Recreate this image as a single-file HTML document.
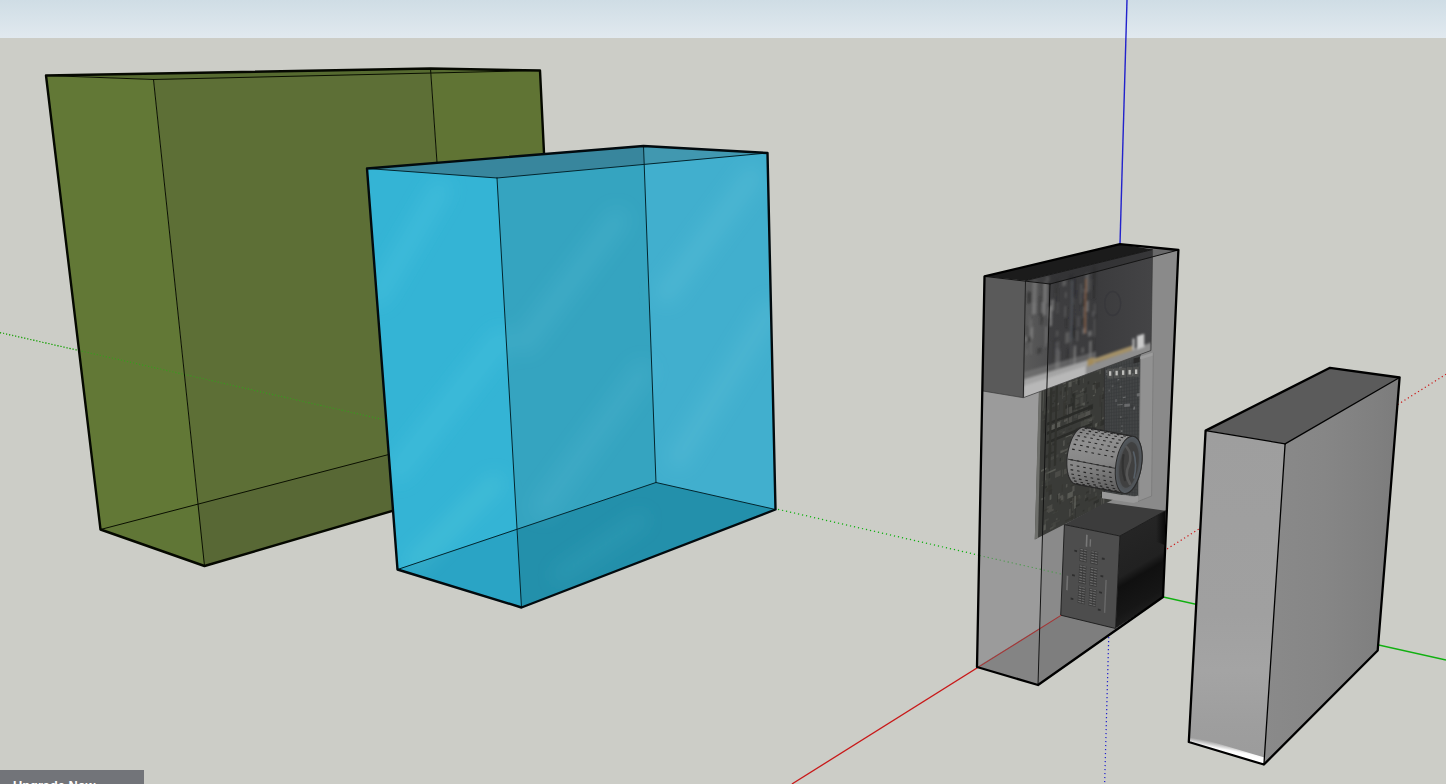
<!DOCTYPE html>
<html lang="en">
<head>
<meta charset="utf-8">
<title>SketchUp Model</title>
<style>
html,body{margin:0;padding:0;width:1446px;height:784px;overflow:hidden;background:#cccdc7;}
#stage{position:relative;width:1446px;height:784px;overflow:hidden;background:#cccdc7;}
#sky{position:absolute;left:0;top:0;width:1446px;height:38px;background:linear-gradient(#cfdde5,#e1e9ef);}
svg{position:absolute;left:0;top:0;}
#upgrade{position:absolute;left:0;top:770px;width:144px;height:30px;background:#727479;color:#fff;
 font-family:"Liberation Sans",sans-serif;font-weight:bold;font-size:12.8px;line-height:14px;}
#upgrade span{position:absolute;left:13px;top:8.7px;white-space:nowrap;}
</style>
</head>
<body>
<div id="stage">
<div id="sky"></div>
<svg width="1446" height="784" viewBox="0 0 1446 784">
<defs>
<linearGradient id="gbl" x1="0" y1="0" x2="0" y2="1"><stop offset="0" stop-color="#9e9e9e"/><stop offset="0.55" stop-color="#a0a0a0"/><stop offset="0.72" stop-color="#a4a4a4"/><stop offset="0.88" stop-color="#9e9e9e"/><stop offset="1" stop-color="#9b9b9b"/></linearGradient>
<linearGradient id="gbr" x1="0" y1="0" x2="1" y2="0"><stop offset="0" stop-color="#8a8a8a"/><stop offset="0.45" stop-color="#868686"/><stop offset="0.8" stop-color="#808080"/><stop offset="1" stop-color="#7c7c7c"/></linearGradient>
<linearGradient id="gbh" gradientUnits="userSpaceOnUse" x1="1226" y1="744" x2="1224.5" y2="752"><stop offset="0" stop-color="#fff" stop-opacity="0"/><stop offset="0.7" stop-color="#fff" stop-opacity="0.95"/><stop offset="1" stop-color="#fff"/></linearGradient>
<filter id="bstreak" x="-20%" y="-20%" width="140%" height="140%"><feGaussianBlur stdDeviation="9"/></filter>
<clipPath id="blueclip"><polygon points="367,168.5 643.5,146 767.5,153 775.5,509.5 521.5,607.5 397.5,569.5"/></clipPath>
</defs>

<!-- ===== AXES (behind objects) ===== -->
<g id="axes-back" fill="none">
  <line x1="0" y1="332.6" x2="400" y2="423.4" stroke="#18b018" stroke-width="1.1" stroke-dasharray="1.1 2"/>
  <line x1="770" y1="507.5" x2="1109.5" y2="585" stroke="#10b010" stroke-width="1.25" stroke-dasharray="1.2 2.9"/>
  <line x1="1109.5" y1="585" x2="1446" y2="660" stroke="#10b010" stroke-width="1.3"/>
  <line x1="1109.5" y1="585" x2="1446" y2="374.3" stroke="#cc1515" stroke-width="1.25" stroke-dasharray="1.2 2.8"/>
  <line x1="1127" y1="0" x2="1120" y2="244" stroke="#2222cc" stroke-width="1.4"/>
  <line x1="1110.2" y1="585" x2="1104.6" y2="784" stroke="#2222cc" stroke-width="1.25" stroke-dasharray="1.2 2.8"/>
</g>

<!-- ===== GREEN BOX ===== -->
<g id="greenbox">
  <polygon points="46,75.5 153.5,79.5 204.5,566 100.5,529.5" fill="#627836"/>
  <polygon points="153.5,79.5 430.5,68.5 456,437 204.5,566" fill="#5d6f36"/>
  <polygon points="430.5,68.5 540,70.5 559,462 456,437" fill="#607434"/>
  <polygon points="46,75.5 430.5,68.5 540,70.5 153.5,79.5" fill="#566a30"/>
  <polygon points="204.5,566 559,462 456,437 197.6,504.2" fill="#586835"/>
  <polygon points="100.5,529.5 197.6,504.2 204.5,566" fill="#607636"/>
  <!-- axis seen through -->
  <line x1="0" y1="332.6" x2="392" y2="421.6" stroke="#35a01c" stroke-width="1.1" stroke-dasharray="1.1 2"/>
  <g stroke="#0a0f00" stroke-width="1" fill="none" stroke-linecap="round">
    <line x1="46" y1="75.5" x2="153.5" y2="79.5"/>
    <line x1="153.5" y1="79.5" x2="540" y2="70.5"/>
    <line x1="153.5" y1="79.5" x2="204.5" y2="566"/>
    <line x1="430.5" y1="68.5" x2="456" y2="437"/>
    <line x1="100.5" y1="529.5" x2="456" y2="437"/>
    <line x1="456" y1="437" x2="559" y2="462"/>
  </g>
  <polygon points="46,75.5 430.5,68.5 540,70.5 559,462 204.5,566 100.5,529.5" fill="none" stroke="#050800" stroke-width="2.4" stroke-linejoin="round"/>
</g>

<!-- ===== BLUE BOX ===== -->
<g id="bluebox">
  <polygon points="367,168.5 643.5,146 767.5,153 775.5,509.5 521.5,607.5 397.5,569.5" fill="#35a4c0"/>
  <polygon points="367,168.5 497,178 521.5,607.5 397.5,569.5" fill="#34b4d5"/>
  <polygon points="643.5,146 767.5,153 775.5,509.5 656,482.5" fill="#41afce"/>
  <polygon points="367,168.5 643.5,146 767.5,153 497,178" fill="#38869d"/>
  <polygon points="643.5,146 767.5,153 644.4,164.4" fill="#4198b0"/>
  <polygon points="397.5,569.5 656,482.5 775.5,509.5 521.5,607.5" fill="#2390ab"/>
  <polygon points="397.5,569.5 517.6,528.3 521.5,607.5" fill="#2aa4c5"/>
  <g clip-path="url(#blueclip)" filter="url(#bstreak)" stroke-linecap="round" fill="none">
    <line x1="378" y1="295" x2="440" y2="190" stroke="#6fe0f0" stroke-opacity="0.15" stroke-width="22"/>
    <line x1="398" y1="470" x2="500" y2="340" stroke="#6fe0f0" stroke-opacity="0.13" stroke-width="26"/>
    <line x1="415" y1="562" x2="495" y2="483" stroke="#7fe8e0" stroke-opacity="0.17" stroke-width="18"/>
    <line x1="525" y1="342" x2="617" y2="220" stroke="#7fd8ea" stroke-opacity="0.11" stroke-width="24"/>
    <line x1="543" y1="507" x2="642" y2="372" stroke="#7fd8ea" stroke-opacity="0.10" stroke-width="24"/>
    <line x1="666" y1="293" x2="752" y2="177" stroke="#8fe0f0" stroke-opacity="0.11" stroke-width="24"/>
    <line x1="678" y1="458" x2="770" y2="311" stroke="#8fe0f0" stroke-opacity="0.10" stroke-width="24"/>
    <line x1="560" y1="575" x2="640" y2="520" stroke="#5fc8d8" stroke-opacity="0.13" stroke-width="16"/>
  </g>
  <g stroke="#03252e" stroke-width="1" fill="none" stroke-linecap="round">
    <line x1="367" y1="168.5" x2="497" y2="178"/>
    <line x1="497" y1="178" x2="767.5" y2="153"/>
    <line x1="497" y1="178" x2="521.5" y2="607.5"/>
    <line x1="643.5" y1="146" x2="656" y2="482.5"/>
    <line x1="397.5" y1="569.5" x2="656" y2="482.5"/>
    <line x1="656" y1="482.5" x2="775.5" y2="509.5"/>
  </g>
  <polygon points="367,168.5 643.5,146 767.5,153 775.5,509.5 521.5,607.5 397.5,569.5" fill="none" stroke="#020a0e" stroke-width="2.4" stroke-linejoin="round"/>
</g>

<!-- ===== RED AXIS solid ===== -->
<line x1="791.9" y1="784" x2="1109.5" y2="585" stroke="#c81818" stroke-width="1.3"/>

<!-- ===== PC CASE ===== -->
<g id="case">
<polygon points="984.5,276.4 1119.9,244.1 1178.4,250.0 1163.0,597.0 1038.0,685.0 977.0,667.0" fill="#8a8a8a"/>
<polygon points="984.5,276.4 1050.0,284.0 1038.0,685.0 977.0,667.0" fill="#9b9b9b"/>
<polygon points="977.0,667.0 1109.5,585.0 1163.0,597.0 1038.0,685.0" fill="#7e7e7e"/>
<polygon points="977.0,667.0 1039.3,629.0 1038.0,685.0" fill="#848484"/>
<polygon points="1039.5,380.0 1140.4,345.0 1140.4,485.7 1034.8,539.4" fill="#3a3b38"/>
<polygon points="1034.8,539.4 1038.8,391.0 1041.5,390.0 1038.0,537.8" fill="#6d6e6a"/>
<polygon points="1063.2,396.2 1064.8,395.6 1064.8,396.8 1063.2,397.4" fill="#565752" opacity="0.6"/>
<polygon points="1066.3,381.8 1067.3,381.5 1066.9,400.6 1065.9,401.0" fill="#33342f" opacity="0.6"/>
<polygon points="1069.2,406.8 1072.2,405.6 1071.8,424.9 1068.8,426.1" fill="#565752" opacity="0.6"/>
<polygon points="1102.4,448.6 1110.4,445.0 1110.4,446.2 1102.4,449.8" fill="#33342f" opacity="0.6"/>
<polygon points="1044.2,413.5 1045.3,413.1 1044.7,433.0 1043.6,433.4" fill="#2e2f2b" opacity="0.6"/>
<polygon points="1076.4,451.5 1077.4,451.1 1077.0,470.7 1076.0,471.2" fill="#282926" opacity="0.6"/>
<polygon points="1065.2,453.0 1066.8,452.3 1066.8,453.5 1065.1,454.2" fill="#6d6e68" opacity="0.6"/>
<polygon points="1085.8,426.8 1088.9,425.5 1088.9,430.7 1085.7,432.1" fill="#6d6e68" opacity="0.6"/>
<polygon points="1065.4,409.3 1066.4,408.9 1066.3,413.8 1065.3,414.2" fill="#62635d" opacity="0.6"/>
<polygon points="1074.5,497.3 1079.9,494.7 1079.8,497.8 1074.4,500.4" fill="#565752" opacity="0.6"/>
<polygon points="1048.2,441.0 1051.5,439.6 1051.5,441.5 1048.1,442.9" fill="#33342f" opacity="0.6"/>
<polygon points="1041.6,481.5 1050.7,477.4 1050.6,480.5 1041.5,484.7" fill="#434440" opacity="0.6"/>
<polygon points="1079.9,451.3 1085.1,449.0 1085.1,450.2 1079.9,452.5" fill="#62635d" opacity="0.6"/>
<polygon points="1071.7,467.3 1073.3,466.5 1073.2,469.6 1071.6,470.4" fill="#6d6e68" opacity="0.6"/>
<polygon points="1059.8,431.5 1063.0,430.2 1063.0,431.4 1059.7,432.7" fill="#434440" opacity="0.6"/>
<polygon points="1052.8,395.2 1054.4,394.6 1054.4,396.4 1052.7,397.0" fill="#2e2f2b" opacity="0.6"/>
<polygon points="1089.6,421.0 1090.3,420.8 1090.1,432.7 1089.4,433.0" fill="#33342f" opacity="0.6"/>
<polygon points="1076.1,497.7 1081.5,495.1 1081.4,498.3 1076.0,500.9" fill="#434440" opacity="0.6"/>
<polygon points="1086.1,420.0 1087.1,419.6 1087.0,424.4 1086.0,424.8" fill="#2e2f2b" opacity="0.6"/>
<polygon points="1056.7,410.5 1057.8,410.1 1057.5,422.3 1056.4,422.8" fill="#4b4c48" opacity="0.6"/>
<polygon points="1049.6,457.8 1058.6,453.9 1058.5,457.0 1049.6,460.9" fill="#4b4c48" opacity="0.6"/>
<polygon points="1069.9,498.9 1078.5,494.7 1078.5,500.2 1069.8,504.4" fill="#33342f" opacity="0.6"/>
<polygon points="1046.3,474.2 1047.4,473.7 1047.3,477.6 1046.2,478.0" fill="#282926" opacity="0.6"/>
<polygon points="1071.1,387.5 1071.7,387.2 1071.3,406.3 1070.7,406.6" fill="#2e2f2b" opacity="0.6"/>
<polygon points="1075.1,508.1 1075.7,507.7 1075.4,528.1 1074.7,528.4" fill="#282926" opacity="0.6"/>
<polygon points="1082.2,388.8 1085.3,387.6 1085.3,390.5 1082.2,391.7" fill="#6d6e68" opacity="0.6"/>
<polygon points="1046.8,506.7 1052.5,504.0 1052.3,509.6 1046.6,512.4" fill="#565752" opacity="0.6"/>
<polygon points="1048.7,490.6 1052.1,489.0 1051.9,494.6 1048.5,496.3" fill="#2e2f2b" opacity="0.6"/>
<polygon points="1075.7,399.2 1077.4,398.6 1077.1,417.7 1075.4,418.3" fill="#4b4c48" opacity="0.6"/>
<polygon points="1091.1,406.4 1092.6,405.7 1092.6,408.7 1091.0,409.3" fill="#2e2f2b" opacity="0.6"/>
<polygon points="1065.1,405.8 1073.6,402.5 1073.6,405.5 1065.0,408.8" fill="#282926" opacity="0.6"/>
<polygon points="1093.1,480.0 1095.2,479.0 1095.1,480.8 1093.1,481.8" fill="#434440" opacity="0.6"/>
<polygon points="1087.9,507.8 1090.8,506.3 1090.7,513.8 1087.8,515.3" fill="#434440" opacity="0.6"/>
<polygon points="1069.0,509.3 1070.8,508.4 1070.6,516.0 1068.9,516.9" fill="#565752" opacity="0.6"/>
<polygon points="1056.5,405.3 1058.7,404.5 1058.6,409.8 1056.4,410.6" fill="#4b4c48" opacity="0.6"/>
<polygon points="1072.1,465.4 1073.7,464.7 1073.7,466.0 1072.0,466.7" fill="#282926" opacity="0.6"/>
<polygon points="1073.3,396.3 1076.5,395.1 1076.5,396.3 1073.3,397.5" fill="#33342f" opacity="0.6"/>
<polygon points="1070.7,479.4 1071.7,479.0 1071.7,482.7 1070.6,483.2" fill="#2e2f2b" opacity="0.6"/>
<polygon points="1041.1,469.9 1046.8,467.4 1046.7,469.3 1041.0,471.9" fill="#6d6e68" opacity="0.6"/>
<polygon points="1084.5,416.4 1085.5,416.0 1085.2,435.1 1084.2,435.5" fill="#565752" opacity="0.6"/>
<polygon points="1074.4,506.1 1079.8,503.4 1079.8,505.3 1074.4,508.0" fill="#282926" opacity="0.6"/>
<polygon points="1042.7,412.9 1051.7,409.5 1051.6,411.3 1042.7,414.7" fill="#434440" opacity="0.6"/>
<polygon points="1057.9,437.1 1060.1,436.2 1060.1,437.4 1057.9,438.4" fill="#434440" opacity="0.6"/>
<polygon points="1099.2,454.6 1107.3,450.9 1107.3,456.1 1099.2,459.8" fill="#2e2f2b" opacity="0.6"/>
<polygon points="1075.9,444.8 1077.5,444.1 1077.4,449.5 1075.8,450.2" fill="#4b4c48" opacity="0.6"/>
<polygon points="1092.5,385.1 1094.5,384.4 1094.5,389.4 1092.4,390.2" fill="#565752" opacity="0.6"/>
<polygon points="1078.0,415.5 1086.4,412.1 1086.3,417.3 1077.9,420.7" fill="#565752" opacity="0.6"/>
<polygon points="1099.3,369.8 1100.9,369.3 1100.9,373.8 1099.3,374.4" fill="#565752" opacity="0.6"/>
<polygon points="1074.2,451.1 1075.8,450.4 1075.7,455.8 1074.1,456.5" fill="#282926" opacity="0.6"/>
<polygon points="1086.6,430.0 1094.8,426.6 1094.7,431.8 1086.5,435.3" fill="#282926" opacity="0.6"/>
<polygon points="1086.0,491.9 1089.2,490.4 1089.2,492.2 1086.0,493.8" fill="#2e2f2b" opacity="0.6"/>
<polygon points="1068.6,428.8 1071.8,427.5 1071.8,428.7 1068.6,430.0" fill="#33342f" opacity="0.6"/>
<polygon points="1044.0,480.6 1045.7,479.8 1045.6,481.7 1043.9,482.5" fill="#434440" opacity="0.6"/>
<polygon points="1048.1,511.3 1053.8,508.5 1053.7,510.5 1048.0,513.3" fill="#565752" opacity="0.6"/>
<polygon points="1067.1,443.3 1069.3,442.4 1069.2,444.2 1067.1,445.1" fill="#33342f" opacity="0.6"/>
<polygon points="1064.1,402.3 1067.3,401.1 1067.3,402.3 1064.0,403.5" fill="#4b4c48" opacity="0.6"/>
<polygon points="1063.1,440.8 1064.8,440.1 1064.7,445.5 1063.0,446.2" fill="#62635d" opacity="0.6"/>
<polygon points="1075.9,379.3 1076.5,379.0 1076.4,383.8 1075.8,384.0" fill="#62635d" opacity="0.6"/>
<polygon points="1041.1,498.6 1044.6,497.0 1044.5,499.0 1041.1,500.6" fill="#62635d" opacity="0.6"/>
<polygon points="1067.5,450.4 1076.1,446.6 1076.0,452.0 1067.4,455.8" fill="#565752" opacity="0.6"/>
<polygon points="1057.9,493.9 1060.2,492.8 1060.0,498.4 1057.8,499.4" fill="#62635d" opacity="0.6"/>
<polygon points="1101.8,449.4 1104.9,448.1 1104.8,449.2 1101.8,450.6" fill="#282926" opacity="0.6"/>
<polygon points="1042.7,510.8 1048.4,508.0 1048.4,509.3 1042.7,512.1" fill="#33342f" opacity="0.6"/>
<polygon points="1101.7,398.0 1103.7,397.2 1103.7,398.4 1101.7,399.1" fill="#282926" opacity="0.6"/>
<polygon points="1101.3,498.0 1101.9,497.7 1101.9,505.1 1101.2,505.4" fill="#62635d" opacity="0.6"/>
<polygon points="1082.2,443.2 1084.3,442.3 1084.3,445.3 1082.2,446.2" fill="#2e2f2b" opacity="0.6"/>
<polygon points="1057.3,494.8 1058.0,494.4 1057.9,502.1 1057.1,502.4" fill="#282926" opacity="0.6"/>
<polygon points="1075.5,405.0 1080.7,403.0 1080.7,404.2 1075.5,406.2" fill="#33342f" opacity="0.6"/>
<polygon points="1084.0,444.6 1089.2,442.3 1089.2,445.3 1084.0,447.6" fill="#282926" opacity="0.6"/>
<polygon points="1062.2,496.8 1064.4,495.7 1064.3,501.3 1062.1,502.3" fill="#4b4c48" opacity="0.6"/>
<polygon points="1096.6,365.0 1099.3,364.0 1099.3,370.9 1096.5,371.9" fill="#565752" opacity="0.6"/>
<polygon points="1085.0,420.5 1093.2,417.2 1093.2,420.1 1084.9,423.5" fill="#62635d" opacity="0.6"/>
<polygon points="1044.0,408.4 1047.2,407.2 1047.0,414.6 1043.8,415.8" fill="#434440" opacity="0.6"/>
<polygon points="1102.8,497.8 1104.4,497.0 1104.2,516.6 1102.6,517.5" fill="#62635d" opacity="0.6"/>
<polygon points="1055.9,403.5 1059.0,402.4 1058.8,409.6 1055.8,410.8" fill="#62635d" opacity="0.6"/>
<polygon points="1074.9,398.9 1075.5,398.7 1075.2,417.8 1074.5,418.1" fill="#565752" opacity="0.6"/>
<polygon points="1049.3,465.7 1050.0,465.4 1049.7,478.1 1049.0,478.4" fill="#282926" opacity="0.6"/>
<polygon points="1043.6,525.1 1045.9,523.9 1045.7,529.7 1043.4,530.8" fill="#6d6e68" opacity="0.6"/>
<polygon points="1049.2,486.5 1051.4,485.5 1051.4,486.8 1049.1,487.8" fill="#33342f" opacity="0.6"/>
<polygon points="1088.4,481.3 1090.5,480.3 1090.5,481.5 1088.4,482.5" fill="#282926" opacity="0.6"/>
<polygon points="1047.4,386.3 1050.7,385.1 1050.7,386.3 1047.3,387.5" fill="#6d6e68" opacity="0.6"/>
<polygon points="1077.4,459.4 1085.8,455.6 1085.8,457.4 1077.4,461.2" fill="#4b4c48" opacity="0.6"/>
<polygon points="1072.2,381.4 1080.6,378.4 1080.6,379.6 1072.2,382.6" fill="#565752" opacity="0.6"/>
<polygon points="1089.9,431.7 1091.6,431.0 1091.5,434.6 1089.9,435.3" fill="#282926" opacity="0.6"/>
<polygon points="1055.1,472.6 1060.7,470.1 1060.6,475.6 1055.0,478.1" fill="#565752" opacity="0.6"/>
<polygon points="1071.9,470.0 1073.0,469.6 1072.9,473.3 1071.9,473.8" fill="#2e2f2b" opacity="0.6"/>
<polygon points="1062.1,469.7 1063.1,469.2 1063.0,476.8 1061.9,477.3" fill="#4b4c48" opacity="0.6"/>
<polygon points="1071.5,513.4 1073.2,512.6 1073.2,514.5 1071.5,515.3" fill="#62635d" opacity="0.6"/>
<polygon points="1088.0,405.8 1093.1,403.8 1093.0,408.9 1087.9,411.0" fill="#282926" opacity="0.6"/>
<polygon points="1062.6,387.1 1063.3,386.9 1063.0,398.9 1062.3,399.1" fill="#565752" opacity="0.6"/>
<polygon points="1093.7,501.7 1098.9,499.1 1098.8,502.1 1093.7,504.7" fill="#282926" opacity="0.6"/>
<polygon points="1046.5,393.6 1055.3,390.4 1055.2,393.4 1046.4,396.7" fill="#2e2f2b" opacity="0.6"/>
<polygon points="1080.3,458.6 1083.5,457.2 1083.5,458.4 1080.3,459.8" fill="#282926" opacity="0.6"/>
<polygon points="1072.6,498.3 1073.3,498.0 1073.1,510.6 1072.4,511.0" fill="#6d6e68" opacity="0.6"/>
<polygon points="1086.0,423.6 1088.0,422.7 1088.0,428.0 1085.9,428.8" fill="#434440" opacity="0.6"/>
<polygon points="1048.7,428.0 1052.1,426.6 1052.0,429.7 1048.6,431.1" fill="#565752" opacity="0.6"/>
<polygon points="1102.6,387.7 1104.2,387.1 1104.2,390.5 1102.6,391.1" fill="#565752" opacity="0.6"/>
<polygon points="1065.1,520.6 1073.9,516.2 1073.9,517.4 1065.1,521.9" fill="#33342f" opacity="0.6"/>
<polygon points="1089.8,486.8 1090.4,486.5 1090.3,493.9 1089.7,494.2" fill="#62635d" opacity="0.6"/>
<polygon points="1083.6,388.3 1086.6,387.2 1086.6,392.3 1083.5,393.5" fill="#282926" opacity="0.6"/>
<polygon points="1091.0,476.1 1096.2,473.6 1096.2,474.9 1091.0,477.3" fill="#33342f" opacity="0.6"/>
<polygon points="1099.8,494.6 1107.9,490.6 1107.9,492.4 1099.7,496.4" fill="#4b4c48" opacity="0.6"/>
<polygon points="1101.9,417.8 1109.8,414.5 1109.8,416.3 1101.9,419.6" fill="#62635d" opacity="0.6"/>
<polygon points="1071.7,504.2 1072.8,503.7 1072.4,524.0 1071.3,524.5" fill="#33342f" opacity="0.6"/>
<polygon points="1064.0,417.0 1067.3,415.7 1067.2,421.0 1063.9,422.3" fill="#62635d" opacity="0.6"/>
<polygon points="1072.3,467.7 1073.9,467.0 1073.8,468.8 1072.2,469.6" fill="#565752" opacity="0.6"/>
<polygon points="1052.6,512.7 1058.2,509.9 1058.2,511.8 1052.5,514.6" fill="#434440" opacity="0.6"/>
<polygon points="1105.7,421.7 1106.7,421.3 1106.6,426.0 1105.7,426.4" fill="#2e2f2b" opacity="0.6"/>
<polygon points="1064.6,387.1 1066.3,386.5 1066.2,391.3 1064.5,391.9" fill="#282926" opacity="0.6"/>
<polygon points="1098.4,467.5 1103.5,465.1 1103.4,470.4 1098.4,472.8" fill="#282926" opacity="0.6"/>
<polygon points="1066.1,422.0 1069.2,420.8 1069.1,424.4 1066.1,425.7" fill="#434440" opacity="0.6"/>
<polygon points="1048.4,453.6 1049.1,453.3 1049.0,458.4 1048.2,458.7" fill="#282926" opacity="0.6"/>
<polygon points="1065.7,467.2 1071.1,464.8 1071.1,467.9 1065.6,470.4" fill="#4b4c48" opacity="0.6"/>
<polygon points="1048.8,441.8 1051.9,440.5 1051.6,453.0 1048.5,454.4" fill="#33342f" opacity="0.6"/>
<polygon points="1100.8,492.2 1109.0,488.2 1108.9,493.5 1100.8,497.6" fill="#282926" opacity="0.6"/>
<polygon points="1092.8,395.3 1094.8,394.5 1094.8,395.7 1092.8,396.5" fill="#6d6e68" opacity="0.6"/>
<polygon points="1044.4,496.8 1045.5,496.3 1045.4,500.2 1044.3,500.7" fill="#4b4c48" opacity="0.6"/>
<polygon points="1083.9,410.0 1085.9,409.2 1085.9,412.1 1083.8,413.0" fill="#33342f" opacity="0.6"/>
<polygon points="1087.7,381.7 1089.2,381.1 1089.2,384.0 1087.6,384.6" fill="#282926" opacity="0.6"/>
<polygon points="1067.2,405.1 1067.9,404.8 1067.5,424.1 1066.8,424.4" fill="#62635d" opacity="0.6"/>
<polygon points="1106.0,397.8 1108.9,396.6 1108.9,398.4 1105.9,399.5" fill="#282926" opacity="0.6"/>
<polygon points="1078.2,373.6 1079.9,373.0 1079.6,384.7 1078.0,385.3" fill="#282926" opacity="0.6"/>
<polygon points="1073.3,468.1 1073.9,467.8 1073.7,480.2 1073.0,480.5" fill="#33342f" opacity="0.6"/>
<polygon points="1101.7,392.3 1103.1,391.7 1103.1,394.6 1101.6,395.2" fill="#434440" opacity="0.6"/>
<polygon points="1086.5,394.1 1087.1,393.9 1087.0,400.9 1086.4,401.2" fill="#282926" opacity="0.6"/>
<polygon points="1060.1,495.9 1063.2,494.4 1063.1,499.5 1060.0,501.0" fill="#62635d" opacity="0.6"/>
<polygon points="1046.7,472.4 1055.7,468.4 1055.7,470.3 1046.7,474.3" fill="#6d6e68" opacity="0.6"/>
<polygon points="1067.8,469.2 1076.5,465.3 1076.4,467.1 1067.8,471.0" fill="#4b4c48" opacity="0.6"/>
<polygon points="1052.7,523.1 1055.8,521.5 1055.7,526.7 1052.5,528.3" fill="#4b4c48" opacity="0.6"/>
<polygon points="1052.6,443.8 1056.0,442.4 1055.9,443.7 1052.6,445.1" fill="#2e2f2b" opacity="0.6"/>
<polygon points="1063.4,401.1 1066.4,399.9 1066.0,419.2 1063.0,420.4" fill="#33342f" opacity="0.6"/>
<polygon points="1094.9,503.5 1095.9,503.0 1095.7,515.4 1094.7,516.0" fill="#565752" opacity="0.6"/>
<polygon points="1059.5,426.6 1061.2,425.9 1061.1,427.8 1059.5,428.4" fill="#62635d" opacity="0.6"/>
<polygon points="1094.9,423.8 1097.7,422.6 1097.7,426.1 1094.8,427.3" fill="#6d6e68" opacity="0.6"/>
<polygon points="1053.6,430.9 1059.1,428.6 1059.1,429.9 1053.5,432.1" fill="#282926" opacity="0.6"/>
<polygon points="1093.6,472.2 1096.5,470.9 1096.4,474.5 1093.5,475.9" fill="#565752" opacity="0.6"/>
<polygon points="1094.4,372.3 1096.4,371.6 1096.4,372.7 1094.4,373.5" fill="#434440" opacity="0.6"/>
<polygon points="1065.2,421.9 1065.9,421.6 1065.5,441.2 1064.8,441.5" fill="#434440" opacity="0.6"/>
<polygon points="1101.5,402.1 1102.1,401.9 1101.9,420.6 1101.3,420.8" fill="#282926" opacity="0.6"/>
<polygon points="1046.2,486.6 1051.9,484.0 1051.7,489.6 1046.1,492.2" fill="#33342f" opacity="0.6"/>
<polygon points="1095.0,381.8 1095.9,381.5 1095.8,393.1 1094.8,393.4" fill="#62635d" opacity="0.6"/>
<polygon points="1094.3,472.8 1102.5,468.9 1102.4,470.7 1094.2,474.6" fill="#434440" opacity="0.6"/>
<polygon points="1070.4,485.6 1079.0,481.5 1079.0,482.8 1070.4,486.9" fill="#33342f" opacity="0.6"/>
<polygon points="1090.8,399.3 1092.4,398.7 1092.4,399.9 1090.8,400.5" fill="#434440" opacity="0.6"/>
<polygon points="1051.1,441.1 1051.8,440.8 1051.7,444.5 1051.0,444.8" fill="#565752" opacity="0.6"/>
<polygon points="1054.4,438.9 1055.5,438.4 1055.2,450.9 1054.1,451.3" fill="#33342f" opacity="0.6"/>
<polygon points="1070.1,501.8 1072.3,500.8 1072.3,502.0 1070.1,503.1" fill="#62635d" opacity="0.6"/>
<polygon points="1059.8,458.2 1063.1,456.7 1063.0,459.8 1059.7,461.3" fill="#282926" opacity="0.6"/>
<polygon points="1070.8,398.3 1071.8,397.9 1071.7,402.7 1070.7,403.1" fill="#282926" opacity="0.6"/>
<polygon points="1062.6,431.9 1064.7,431.0 1064.7,432.8 1062.5,433.7" fill="#565752" opacity="0.6"/>
<polygon points="1082.7,510.5 1084.3,509.7 1084.3,511.0 1082.7,511.8" fill="#282926" opacity="0.6"/>
<polygon points="1095.1,493.0 1096.8,492.2 1096.7,495.9 1095.1,496.7" fill="#4b4c48" opacity="0.6"/>
<polygon points="1051.0,523.7 1060.1,519.2 1060.0,521.1 1051.0,525.7" fill="#434440" opacity="0.6"/>
<polygon points="1075.6,395.4 1083.9,392.2 1083.9,395.2 1075.5,398.3" fill="#4b4c48" opacity="0.6"/>
<polygon points="1046.6,468.3 1048.4,467.5 1047.9,487.9 1046.0,488.8" fill="#434440" opacity="0.6"/>
<polygon points="1064.6,380.5 1067.8,379.3 1067.8,380.5 1064.6,381.7" fill="#282926" opacity="0.6"/>
<polygon points="1093.7,479.8 1095.3,479.0 1095.2,491.2 1093.5,492.0" fill="#62635d" opacity="0.6"/>
<polygon points="1046.9,385.0 1050.0,383.9 1049.7,396.0 1046.6,397.1" fill="#565752" opacity="0.6"/>
<polygon points="1092.7,457.7 1094.8,456.8 1094.8,458.0 1092.7,458.9" fill="#33342f" opacity="0.6"/>
<polygon points="1086.8,423.9 1089.9,422.6 1089.9,425.6 1086.8,426.8" fill="#4b4c48" opacity="0.6"/>
<polygon points="1061.0,457.6 1064.3,456.1 1064.2,461.6 1060.9,463.0" fill="#434440" opacity="0.6"/>
<polygon points="1083.6,422.5 1088.8,420.3 1088.8,422.1 1083.6,424.3" fill="#33342f" opacity="0.6"/>
<polygon points="1099.9,420.4 1101.4,419.8 1101.3,425.0 1099.8,425.6" fill="#434440" opacity="0.6"/>
<polygon points="1072.2,394.5 1073.8,393.9 1073.8,395.1 1072.2,395.7" fill="#33342f" opacity="0.6"/>
<polygon points="1045.3,472.8 1046.4,472.3 1046.2,480.0 1045.1,480.5" fill="#62635d" opacity="0.6"/>
<polygon points="1052.1,403.3 1053.8,402.7 1053.8,403.9 1052.1,404.6" fill="#282926" opacity="0.6"/>
<polygon points="1059.4,498.9 1061.0,498.1 1060.9,503.7 1059.2,504.5" fill="#33342f" opacity="0.6"/>
<polygon points="1044.7,486.8 1047.0,485.7 1047.0,487.6 1044.7,488.7" fill="#282926" opacity="0.6"/>
<polygon points="1095.8,388.5 1097.8,387.7 1097.8,388.9 1095.8,389.6" fill="#2e2f2b" opacity="0.6"/>
<polygon points="1067.3,390.7 1068.3,390.3 1068.2,395.1 1067.1,395.5" fill="#4b4c48" opacity="0.6"/>
<polygon points="1085.3,412.3 1090.4,410.3 1090.3,415.5 1085.2,417.5" fill="#62635d" opacity="0.6"/>
<polygon points="1084.1,410.5 1086.2,409.7 1086.1,414.9 1084.0,415.8" fill="#434440" opacity="0.6"/>
<polygon points="1070.5,434.7 1072.1,434.1 1072.1,435.3 1070.5,435.9" fill="#6d6e68" opacity="0.6"/>
<polygon points="1071.7,435.5 1080.2,431.9 1080.1,437.2 1071.6,440.8" fill="#6d6e68" opacity="0.6"/>
<polygon points="1068.5,382.3 1071.7,381.2 1071.6,386.4 1068.4,387.5" fill="#6d6e68" opacity="0.6"/>
<polygon points="1073.7,465.3 1074.7,464.8 1074.7,468.6 1073.6,469.0" fill="#434440" opacity="0.6"/>
<polygon points="1091.9,436.2 1093.4,435.6 1093.4,440.8 1091.8,441.5" fill="#2e2f2b" opacity="0.6"/>
<polygon points="1043.2,391.3 1043.9,391.1 1043.3,410.7 1042.6,411.0" fill="#6d6e68" opacity="0.6"/>
<polygon points="1058.5,495.3 1059.6,494.8 1059.5,499.9 1058.4,500.4" fill="#434440" opacity="0.6"/>
<polygon points="1081.7,403.5 1084.8,402.3 1084.8,405.3 1081.7,406.5" fill="#6d6e68" opacity="0.6"/>
<polygon points="1049.6,452.9 1055.2,450.5 1055.2,452.4 1049.6,454.8" fill="#282926" opacity="0.6"/>
<polygon points="1063.2,379.9 1066.2,378.9 1066.1,383.6 1063.1,384.7" fill="#62635d" opacity="0.6"/>
<polygon points="1084.7,495.3 1086.4,494.5 1086.3,499.5 1084.6,500.3" fill="#4b4c48" opacity="0.6"/>
<polygon points="1083.1,418.2 1083.8,418.0 1083.6,429.9 1082.9,430.2" fill="#33342f" opacity="0.6"/>
<polygon points="1089.6,417.3 1094.8,415.2 1094.7,418.1 1089.6,420.2" fill="#434440" opacity="0.6"/>
<polygon points="1063.9,386.0 1066.0,385.2 1066.0,387.0 1063.8,387.8" fill="#4b4c48" opacity="0.6"/>
<polygon points="1060.1,450.5 1063.4,449.1 1063.3,452.2 1060.0,453.6" fill="#4b4c48" opacity="0.6"/>
<polygon points="1055.8,419.2 1061.3,417.1 1061.2,422.4 1055.7,424.6" fill="#4b4c48" opacity="0.6"/>
<polygon points="1049.9,412.3 1050.6,412.0 1050.5,415.7 1049.8,415.9" fill="#434440" opacity="0.6"/>
<polygon points="1060.6,451.3 1069.3,447.6 1069.3,449.4 1060.5,453.2" fill="#62635d" opacity="0.6"/>
<polygon points="1080.5,397.2 1083.4,396.1 1083.1,415.1 1080.1,416.3" fill="#4b4c48" opacity="0.6"/>
<polygon points="1102.3,394.4 1105.1,393.3 1105.1,397.9 1102.3,399.0" fill="#2e2f2b" opacity="0.6"/>
<polygon points="1097.3,472.7 1102.5,470.3 1102.4,473.3 1097.3,475.7" fill="#4b4c48" opacity="0.6"/>
<polygon points="1083.2,447.3 1086.4,445.9 1086.3,451.2 1083.1,452.6" fill="#6d6e68" opacity="0.6"/>
<polygon points="1055.4,510.9 1057.1,510.1 1057.1,511.3 1055.4,512.2" fill="#33342f" opacity="0.6"/>
<polygon points="1053.8,400.9 1055.5,400.3 1055.4,401.5 1053.8,402.1" fill="#282926" opacity="0.6"/>
<polygon points="1050.7,407.9 1059.5,404.6 1059.4,409.9 1050.6,413.3" fill="#2e2f2b" opacity="0.6"/>
<polygon points="1075.6,379.3 1077.2,378.7 1077.1,383.9 1075.5,384.5" fill="#4b4c48" opacity="0.6"/>
<polygon points="1065.7,436.5 1071.1,434.2 1071.1,435.4 1065.7,437.7" fill="#6d6e68" opacity="0.6"/>
<polygon points="1049.9,528.0 1053.3,526.2 1053.3,528.2 1049.9,529.9" fill="#565752" opacity="0.6"/>
<polygon points="1062.0,484.4 1062.7,484.1 1062.5,491.7 1061.8,492.0" fill="#33342f" opacity="0.6"/>
<polygon points="1085.1,498.4 1088.2,496.9 1088.2,500.0 1085.0,501.5" fill="#282926" opacity="0.6"/>
<polygon points="1045.5,455.5 1047.8,454.5 1047.7,457.6 1045.4,458.6" fill="#282926" opacity="0.6"/>
<polygon points="1102.1,465.3 1105.1,463.9 1105.1,465.7 1102.0,467.1" fill="#434440" opacity="0.6"/>
<polygon points="1080.8,422.0 1089.1,418.6 1089.1,423.8 1080.7,427.2" fill="#4b4c48" opacity="0.6"/>
<polygon points="1097.1,423.5 1099.1,422.7 1099.1,425.6 1097.0,426.5" fill="#33342f" opacity="0.6"/>
<polygon points="1082.9,378.6 1083.9,378.3 1083.8,382.9 1082.9,383.3" fill="#565752" opacity="0.6"/>
<polygon points="1045.3,519.8 1048.7,518.1 1048.7,520.0 1045.2,521.7" fill="#4b4c48" opacity="0.6"/>
<polygon points="1041.6,485.2 1043.4,484.4 1043.3,485.7 1041.6,486.5" fill="#565752" opacity="0.6"/>
<polygon points="1096.4,470.2 1098.5,469.2 1098.5,470.4 1096.4,471.4" fill="#33342f" opacity="0.6"/>
<polygon points="1048.2,409.7 1049.0,409.5 1048.9,413.2 1048.2,413.4" fill="#565752" opacity="0.6"/>
<polygon points="1094.7,452.2 1097.5,450.9 1097.5,458.1 1094.6,459.4" fill="#565752" opacity="0.6"/>
<polygon points="1092.5,455.3 1095.6,453.9 1095.6,456.9 1092.5,458.3" fill="#62635d" opacity="0.6"/>
<polygon points="1042.0,419.6 1045.4,418.3 1045.4,419.5 1042.0,420.9" fill="#434440" opacity="0.6"/>
<polygon points="1099.8,469.6 1107.9,465.9 1107.9,471.1 1099.8,474.9" fill="#4b4c48" opacity="0.6"/>
<polygon points="1093.5,368.4 1101.5,365.6 1101.5,366.7 1093.5,369.5" fill="#4b4c48" opacity="0.6"/>
<polygon points="1077.1,400.3 1078.8,399.6 1078.7,403.2 1077.1,403.9" fill="#4b4c48" opacity="0.6"/>
<polygon points="1076.0,410.9 1077.6,410.3 1077.6,411.5 1076.0,412.1" fill="#565752" opacity="0.6"/>
<polygon points="1072.4,486.6 1074.6,485.6 1074.5,491.0 1072.3,492.1" fill="#62635d" opacity="0.6"/>
<polygon points="1079.9,391.1 1081.9,390.3 1081.9,392.1 1079.8,392.9" fill="#565752" opacity="0.6"/>
<polygon points="1101.6,468.5 1106.7,466.1 1106.7,467.3 1101.6,469.7" fill="#434440" opacity="0.6"/>
<polygon points="1044.5,520.1 1046.2,519.3 1046.0,525.0 1044.3,525.9" fill="#4b4c48" opacity="0.6"/>
<polygon points="1065.9,417.0 1071.3,414.9 1071.2,416.7 1065.9,418.8" fill="#282926" opacity="0.6"/>
<polygon points="1103.0,378.1 1110.8,375.2 1110.8,376.3 1102.9,379.2" fill="#434440" opacity="0.6"/>
<polygon points="1074.3,496.3 1076.0,495.5 1075.8,508.1 1074.0,509.0" fill="#6d6e68" opacity="0.6"/>
<polygon points="1086.8,402.3 1088.8,401.5 1088.8,403.3 1086.7,404.1" fill="#282926" opacity="0.6"/>
<polygon points="1075.0,408.3 1083.4,405.1 1083.4,406.8 1075.0,410.1" fill="#282926" opacity="0.6"/>
<polygon points="1088.2,450.9 1089.2,450.5 1089.1,457.8 1088.1,458.2" fill="#282926" opacity="0.6"/>
<polygon points="1055.9,518.5 1057.6,517.7 1057.6,519.6 1055.9,520.5" fill="#565752" opacity="0.6"/>
<polygon points="1054.5,399.4 1056.7,398.6 1056.6,401.6 1054.4,402.5" fill="#33342f" opacity="0.6"/>
<polygon points="1060.0,391.4 1061.7,390.8 1061.6,394.4 1059.9,395.0" fill="#33342f" opacity="0.6"/>
<polygon points="1072.9,373.1 1078.1,371.3 1078.0,373.0 1072.8,374.9" fill="#62635d" opacity="0.6"/>
<polygon points="1072.4,391.5 1075.4,390.4 1075.0,409.4 1072.1,410.6" fill="#282926" opacity="0.6"/>
<polygon points="1100.3,421.2 1108.2,417.8 1108.2,423.0 1100.2,426.3" fill="#282926" opacity="0.6"/>
<polygon points="1085.3,457.8 1090.5,455.5 1090.4,460.8 1085.2,463.2" fill="#565752" opacity="0.6"/>
<polygon points="1099.7,395.2 1100.7,394.8 1100.6,406.4 1099.6,406.8" fill="#33342f" opacity="0.6"/>
<polygon points="1074.1,373.7 1079.3,371.8 1079.2,373.6 1074.0,375.4" fill="#434440" opacity="0.6"/>
<polygon points="1092.2,418.7 1092.8,418.4 1092.7,430.3 1092.0,430.6" fill="#282926" opacity="0.6"/>
<polygon points="1049.7,495.0 1051.5,494.2 1051.4,499.3 1049.6,500.2" fill="#6d6e68" opacity="0.6"/>
<polygon points="1076.0,473.1 1084.5,469.2 1084.5,470.5 1076.0,474.4" fill="#434440" opacity="0.6"/>
<polygon points="1075.5,428.6 1080.8,426.4 1080.8,428.2 1075.5,430.4" fill="#2e2f2b" opacity="0.6"/>
<polygon points="1065.9,484.6 1067.5,483.8 1067.4,487.0 1065.8,487.7" fill="#62635d" opacity="0.6"/>
<polygon points="1059.0,433.8 1060.7,433.2 1060.6,434.4 1059.0,435.1" fill="#33342f" opacity="0.6"/>
<polygon points="1081.9,464.2 1083.6,463.5 1083.2,483.2 1081.6,484.0" fill="#62635d" opacity="0.6"/>
<polygon points="1088.7,500.0 1097.0,495.9 1097.0,497.7 1088.6,501.9" fill="#33342f" opacity="0.6"/>
<polygon points="1072.3,394.7 1073.9,394.1 1073.9,395.9 1072.3,396.5" fill="#282926" opacity="0.6"/>
<polygon points="1094.9,383.7 1099.9,381.9 1099.9,386.9 1094.9,388.8" fill="#2e2f2b" opacity="0.6"/>
<polygon points="1092.1,430.1 1094.2,429.3 1094.1,432.2 1092.1,433.1" fill="#62635d" opacity="0.6"/>
<polygon points="1104.5,454.5 1109.6,452.2 1109.5,453.4 1104.5,455.7" fill="#62635d" opacity="0.6"/>
<polygon points="1063.9,469.4 1067.1,467.9 1067.0,473.3 1063.7,474.8" fill="#565752" opacity="0.6"/>
<polygon points="1084.6,418.0 1087.5,416.9 1087.4,424.0 1084.5,425.2" fill="#434440" opacity="0.6"/>
<polygon points="1093.0,383.6 1096.0,382.5 1096.0,383.7 1093.0,384.8" fill="#282926" opacity="0.6"/>
<polygon points="1102.6,452.1 1105.7,450.8 1105.6,451.9 1102.6,453.3" fill="#282926" opacity="0.6"/>
<polygon points="1052.7,444.1 1055.0,443.2 1054.9,445.1 1052.7,446.0" fill="#2e2f2b" opacity="0.6"/>
<polygon points="1080.6,466.7 1082.3,466.0 1082.2,469.6 1080.5,470.4" fill="#282926" opacity="0.6"/>
<polygon points="1075.2,477.1 1080.6,474.6 1080.6,475.9 1075.2,478.4" fill="#62635d" opacity="0.6"/>
<polygon points="1067.5,493.5 1072.9,490.9 1072.8,496.4 1067.3,499.0" fill="#6d6e68" opacity="0.6"/>
<polygon points="1072.7,391.7 1077.9,389.8 1077.9,391.6 1072.7,393.5" fill="#4b4c48" opacity="0.6"/>
<polygon points="1051.5,425.3 1060.3,421.8 1060.2,427.1 1051.3,430.7" fill="#6d6e68" opacity="0.6"/>
<polygon points="1065.8,433.9 1067.4,433.2 1067.3,435.0 1065.7,435.7" fill="#4b4c48" opacity="0.6"/>
<polygon points="1047.2,422.7 1092.1,405.0 1092.1,407.7 1047.1,425.5" fill="#2a2b28"/>
<polygon points="1046.9,432.1 1092.0,413.9 1091.9,416.5 1046.9,434.9" fill="#2a2b28"/>
<polygon points="1046.7,441.4 1091.9,422.8 1091.8,425.4 1046.6,444.2" fill="#2a2b28"/>
<polygon points="1050.4,383.7 1052.6,382.9 1050.5,467.8 1048.2,468.8" fill="#30312d"/>
<polygon points="1055.9,381.7 1058.1,381.0 1056.1,465.3 1053.8,466.3" fill="#30312d"/>
<polygon points="1104.4,352.0 1140.4,342.0 1140.4,497.0 1104.4,492.0" fill="#434546"/>
<line x1="1106.7" y1="365.4" x2="1106.7" y2="492.3" stroke="#383a3b" stroke-width="0.6"/>
<line x1="1109.1" y1="364.9" x2="1109.1" y2="492.7" stroke="#383a3b" stroke-width="0.6"/>
<line x1="1111.5" y1="364.3" x2="1111.5" y2="493.0" stroke="#383a3b" stroke-width="0.6"/>
<line x1="1114.0" y1="363.7" x2="1114.0" y2="493.3" stroke="#383a3b" stroke-width="0.6"/>
<line x1="1116.4" y1="363.2" x2="1116.4" y2="493.7" stroke="#383a3b" stroke-width="0.6"/>
<line x1="1118.9" y1="362.6" x2="1118.9" y2="494.0" stroke="#383a3b" stroke-width="0.6"/>
<line x1="1121.5" y1="362.0" x2="1121.5" y2="494.4" stroke="#383a3b" stroke-width="0.6"/>
<line x1="1124.1" y1="361.4" x2="1124.1" y2="494.7" stroke="#383a3b" stroke-width="0.6"/>
<line x1="1126.7" y1="360.7" x2="1126.7" y2="495.1" stroke="#383a3b" stroke-width="0.6"/>
<line x1="1129.4" y1="360.1" x2="1129.4" y2="495.5" stroke="#383a3b" stroke-width="0.6"/>
<line x1="1132.1" y1="359.5" x2="1132.1" y2="495.8" stroke="#383a3b" stroke-width="0.6"/>
<line x1="1134.8" y1="358.8" x2="1134.8" y2="496.2" stroke="#383a3b" stroke-width="0.6"/>
<line x1="1137.6" y1="358.2" x2="1137.6" y2="496.6" stroke="#383a3b" stroke-width="0.6"/>
<line x1="1104.4" y1="369.1" x2="1140.4" y2="361.0" stroke="#393b3c" stroke-width="0.6"/>
<line x1="1104.4" y1="372.3" x2="1140.4" y2="364.5" stroke="#393b3c" stroke-width="0.6"/>
<line x1="1104.4" y1="375.4" x2="1140.4" y2="368.0" stroke="#393b3c" stroke-width="0.6"/>
<line x1="1104.4" y1="378.6" x2="1140.4" y2="371.4" stroke="#393b3c" stroke-width="0.6"/>
<line x1="1104.4" y1="381.8" x2="1140.4" y2="374.9" stroke="#393b3c" stroke-width="0.6"/>
<line x1="1104.4" y1="384.9" x2="1140.4" y2="378.4" stroke="#393b3c" stroke-width="0.6"/>
<line x1="1104.4" y1="388.1" x2="1140.4" y2="381.9" stroke="#393b3c" stroke-width="0.6"/>
<line x1="1104.4" y1="391.2" x2="1140.4" y2="385.4" stroke="#393b3c" stroke-width="0.6"/>
<line x1="1104.4" y1="394.4" x2="1140.4" y2="388.9" stroke="#393b3c" stroke-width="0.6"/>
<line x1="1104.4" y1="397.5" x2="1140.4" y2="392.4" stroke="#393b3c" stroke-width="0.6"/>
<line x1="1104.4" y1="400.6" x2="1140.4" y2="395.9" stroke="#393b3c" stroke-width="0.6"/>
<line x1="1104.4" y1="403.8" x2="1140.4" y2="399.4" stroke="#393b3c" stroke-width="0.6"/>
<line x1="1104.4" y1="406.9" x2="1140.4" y2="402.8" stroke="#393b3c" stroke-width="0.6"/>
<line x1="1104.4" y1="410.1" x2="1140.4" y2="406.3" stroke="#393b3c" stroke-width="0.6"/>
<line x1="1104.4" y1="413.2" x2="1140.4" y2="409.8" stroke="#393b3c" stroke-width="0.6"/>
<line x1="1104.4" y1="416.4" x2="1140.4" y2="413.3" stroke="#393b3c" stroke-width="0.6"/>
<line x1="1104.4" y1="419.6" x2="1140.4" y2="416.8" stroke="#393b3c" stroke-width="0.6"/>
<line x1="1104.4" y1="422.7" x2="1140.4" y2="420.3" stroke="#393b3c" stroke-width="0.6"/>
<line x1="1104.4" y1="425.9" x2="1140.4" y2="423.8" stroke="#393b3c" stroke-width="0.6"/>
<line x1="1104.4" y1="429.0" x2="1140.4" y2="427.2" stroke="#393b3c" stroke-width="0.6"/>
<line x1="1104.4" y1="432.1" x2="1140.4" y2="430.7" stroke="#393b3c" stroke-width="0.6"/>
<line x1="1104.4" y1="435.3" x2="1140.4" y2="434.2" stroke="#393b3c" stroke-width="0.6"/>
<line x1="1104.4" y1="438.4" x2="1140.4" y2="437.7" stroke="#393b3c" stroke-width="0.6"/>
<line x1="1104.4" y1="441.6" x2="1140.4" y2="441.2" stroke="#393b3c" stroke-width="0.6"/>
<line x1="1104.4" y1="444.8" x2="1140.4" y2="444.7" stroke="#393b3c" stroke-width="0.6"/>
<line x1="1104.4" y1="447.9" x2="1140.4" y2="448.2" stroke="#393b3c" stroke-width="0.6"/>
<line x1="1104.4" y1="451.1" x2="1140.4" y2="451.7" stroke="#393b3c" stroke-width="0.6"/>
<line x1="1104.4" y1="454.2" x2="1140.4" y2="455.2" stroke="#393b3c" stroke-width="0.6"/>
<line x1="1104.4" y1="457.4" x2="1140.4" y2="458.6" stroke="#393b3c" stroke-width="0.6"/>
<line x1="1104.4" y1="460.5" x2="1140.4" y2="462.1" stroke="#393b3c" stroke-width="0.6"/>
<line x1="1104.4" y1="463.6" x2="1140.4" y2="465.6" stroke="#393b3c" stroke-width="0.6"/>
<line x1="1104.4" y1="466.8" x2="1140.4" y2="469.1" stroke="#393b3c" stroke-width="0.6"/>
<line x1="1104.4" y1="469.9" x2="1140.4" y2="472.6" stroke="#393b3c" stroke-width="0.6"/>
<line x1="1104.4" y1="473.1" x2="1140.4" y2="476.1" stroke="#393b3c" stroke-width="0.6"/>
<line x1="1104.4" y1="476.2" x2="1140.4" y2="479.6" stroke="#393b3c" stroke-width="0.6"/>
<line x1="1104.4" y1="479.4" x2="1140.4" y2="483.1" stroke="#393b3c" stroke-width="0.6"/>
<line x1="1104.4" y1="482.6" x2="1140.4" y2="486.5" stroke="#393b3c" stroke-width="0.6"/>
<line x1="1104.4" y1="485.7" x2="1140.4" y2="490.0" stroke="#393b3c" stroke-width="0.6"/>
<line x1="1104.4" y1="488.9" x2="1140.4" y2="493.5" stroke="#393b3c" stroke-width="0.6"/>
<polygon points="1106.0,373.9 1111.0,372.9 1111.0,374.6 1106.0,375.6" fill="#626465" opacity="0.7"/>
<polygon points="1121.1,425.5 1122.9,425.4 1122.9,426.6 1121.1,426.7" fill="#6f7172" opacity="0.7"/>
<polygon points="1127.9,443.1 1130.9,443.0 1130.9,444.2 1127.9,444.3" fill="#37393a" opacity="0.7"/>
<polygon points="1115.7,462.0 1121.0,462.2 1121.0,463.4 1115.7,463.1" fill="#37393a" opacity="0.7"/>
<polygon points="1118.7,417.9 1124.1,417.5 1124.1,418.7 1118.7,419.1" fill="#37393a" opacity="0.7"/>
<polygon points="1114.2,467.9 1117.0,468.1 1117.0,469.9 1114.2,469.7" fill="#37393a" opacity="0.7"/>
<polygon points="1133.2,406.8 1135.1,406.6 1135.1,409.6 1133.2,409.8" fill="#7c7e7f" opacity="0.7"/>
<polygon points="1130.4,405.3 1133.5,405.0 1133.5,408.0 1130.4,408.3" fill="#37393a" opacity="0.7"/>
<polygon points="1109.2,485.1 1110.9,485.3 1110.9,486.5 1109.2,486.3" fill="#7c7e7f" opacity="0.7"/>
<polygon points="1128.1,476.2 1133.8,476.7 1133.8,479.8 1128.1,479.2" fill="#626465" opacity="0.7"/>
<polygon points="1117.5,379.2 1119.3,378.9 1119.3,380.1 1117.5,380.4" fill="#7c7e7f" opacity="0.7"/>
<polygon points="1124.3,447.2 1129.9,447.2 1129.9,450.3 1124.3,450.2" fill="#7c7e7f" opacity="0.7"/>
<polygon points="1124.6,443.3 1130.1,443.2 1130.1,446.3 1124.6,446.2" fill="#626465" opacity="0.7"/>
<polygon points="1111.8,448.2 1114.5,448.3 1114.5,451.1 1111.8,451.1" fill="#6f7172" opacity="0.7"/>
<polygon points="1108.4,389.7 1110.1,389.4 1110.1,391.2 1108.4,391.4" fill="#626465" opacity="0.7"/>
<polygon points="1134.6,447.0 1137.7,447.0 1137.7,448.2 1134.6,448.2" fill="#37393a" opacity="0.7"/>
<polygon points="1122.8,397.0 1125.7,396.6 1125.7,397.8 1122.8,398.2" fill="#7c7e7f" opacity="0.7"/>
<polygon points="1106.4,370.8 1111.4,369.7 1111.4,372.5 1106.4,373.6" fill="#626465" opacity="0.7"/>
<polygon points="1120.7,430.2 1122.5,430.2 1122.5,431.9 1120.7,432.0" fill="#7c7e7f" opacity="0.7"/>
<polygon points="1119.1,367.2 1121.9,366.6 1121.9,369.5 1119.1,370.1" fill="#6f7172" opacity="0.7"/>
<polygon points="1120.0,416.6 1121.8,416.5 1121.8,417.6 1120.0,417.8" fill="#7c7e7f" opacity="0.7"/>
<polygon points="1111.7,385.6 1113.5,385.3 1113.5,387.0 1111.7,387.3" fill="#626465" opacity="0.7"/>
<polygon points="1105.7,448.5 1107.3,448.5 1107.3,449.6 1105.7,449.6" fill="#626465" opacity="0.7"/>
<polygon points="1109.2,369.8 1114.3,368.7 1114.3,371.6 1109.2,372.7" fill="#6f7172" opacity="0.7"/>
<polygon points="1119.2,457.9 1121.0,458.0 1121.0,459.7 1119.2,459.6" fill="#6f7172" opacity="0.7"/>
<polygon points="1128.3,374.1 1134.0,373.0 1134.0,376.0 1128.3,377.1" fill="#7c7e7f" opacity="0.7"/>
<polygon points="1119.5,481.3 1122.4,481.6 1122.4,482.8 1119.5,482.5" fill="#626465" opacity="0.7"/>
<polygon points="1105.7,370.3 1110.7,369.2 1110.7,372.0 1105.7,373.1" fill="#626465" opacity="0.7"/>
<polygon points="1117.2,404.5 1122.6,403.9 1122.6,405.0 1117.2,405.6" fill="#7c7e7f" opacity="0.7"/>
<polygon points="1124.3,404.1 1129.9,403.5 1129.9,406.5 1124.3,407.1" fill="#7c7e7f" opacity="0.7"/>
<polygon points="1119.8,386.0 1121.6,385.7 1121.6,387.5 1119.8,387.8" fill="#6f7172" opacity="0.7"/>
<polygon points="1125.0,416.9 1127.9,416.7 1127.9,418.5 1125.0,418.7" fill="#37393a" opacity="0.7"/>
<polygon points="1130.2,435.6 1133.2,435.5 1133.2,437.3 1130.2,437.4" fill="#626465" opacity="0.7"/>
<polygon points="1124.7,446.3 1130.3,446.3 1130.3,448.1 1124.7,448.1" fill="#626465" opacity="0.7"/>
<polygon points="1131.8,439.9 1134.8,439.9 1134.8,442.9 1131.8,443.0" fill="#7c7e7f" opacity="0.7"/>
<polygon points="1136.8,393.5 1140.0,393.1 1140.0,396.2 1136.8,396.6" fill="#7c7e7f" opacity="0.7"/>
<polygon points="1124.1,477.2 1127.0,477.5 1127.0,479.3 1124.1,479.0" fill="#626465" opacity="0.7"/>
<polygon points="1115.1,399.3 1116.9,399.0 1116.9,401.9 1115.1,402.2" fill="#626465" opacity="0.7"/>
<polygon points="1114.1,383.8 1119.3,382.9 1119.3,384.1 1114.1,385.0" fill="#37393a" opacity="0.7"/>
<polygon points="1136.8,465.4 1142.7,465.8 1142.7,468.9 1136.8,468.5" fill="#7c7e7f" opacity="0.7"/>
<rect x="1107.3" y="368.6" width="5.6" height="10" fill="#4f504f"/>
<rect x="1109.0" y="371.2" width="2.3" height="4.6" fill="#bdbdba"/>
<rect x="1113.8" y="368.2" width="5.6" height="10" fill="#4f504f"/>
<rect x="1115.5" y="370.8" width="2.3" height="4.6" fill="#bdbdba"/>
<rect x="1120.3" y="367.7" width="5.6" height="10" fill="#4f504f"/>
<rect x="1122.0" y="370.3" width="2.3" height="4.6" fill="#bdbdba"/>
<rect x="1126.8" y="367.2" width="5.6" height="10" fill="#4f504f"/>
<rect x="1128.5" y="369.9" width="2.3" height="4.6" fill="#bdbdba"/>
<rect x="1133.3" y="366.8" width="5.6" height="10" fill="#4f504f"/>
<rect x="1135.0" y="369.4" width="2.3" height="4.6" fill="#bdbdba"/>
<polygon points="1133.5,358.6 1139.6,357.0 1139.6,362.0 1133.5,363.4" fill="#2c2c2c"/>
<line x1="1104.4" y1="352" x2="1104.4" y2="492" stroke="#2e2f2e" stroke-width="0.8"/>
<polygon points="1140.4,356.5 1153.3,352.5 1151.6,496.0 1138.0,501.5" fill="#919191"/>
<polygon points="1140.4,356.5 1153.3,352.5 1153.3,355.5 1140.4,359.5" fill="#9c9c9c"/>
<polygon points="1102.0,491.6 1133.4,497.0 1138.0,495.5 1138.0,501.5 1133.4,503.0 1102.0,498.2" fill="#999999"/>
<polyline points="1140.4,359 1138.6,496" fill="none" stroke="#6c6c6c" stroke-width="0.7"/>
<polyline points="1153.3,352.5 1151.6,496 1138,501.5" fill="none" stroke="#777" stroke-width="0.7"/>
<defs><linearGradient id="cylg" x1="0" y1="0" x2="0.18" y2="1"><stop offset="0" stop-color="#7d7d7d"/><stop offset="0.25" stop-color="#909090"/><stop offset="0.6" stop-color="#858585"/><stop offset="1" stop-color="#626262"/></linearGradient><radialGradient id="capg" cx="0.5" cy="0.5" r="0.6"><stop offset="0" stop-color="#505050"/><stop offset="0.5" stop-color="#484848"/><stop offset="0.82" stop-color="#545a60"/><stop offset="1" stop-color="#65717d"/></radialGradient></defs>
<polygon points="1075.7,484.1 1074.1,483.6 1072.6,482.7 1071.2,481.2 1070.0,479.3 1068.9,477.0 1068.1,474.4 1067.4,471.4 1067.0,468.1 1066.8,464.7 1066.8,461.1 1067.1,457.3 1067.6,453.6 1068.3,449.9 1069.2,446.3 1070.3,442.8 1071.5,439.6 1072.9,436.6 1074.5,434.0 1076.1,431.7 1077.8,429.9 1079.5,428.5 1081.3,427.5 1083.0,427.0 1084.7,427.1 1133.2,436.4 1134.8,436.9 1136.3,437.8 1137.7,439.3 1138.9,441.2 1140.0,443.5 1140.8,446.1 1141.5,449.1 1141.9,452.4 1142.1,455.8 1142.1,459.4 1141.8,463.2 1141.3,466.9 1140.6,470.6 1139.7,474.2 1138.6,477.7 1137.4,480.9 1136.0,483.9 1134.4,486.5 1132.8,488.8 1131.1,490.6 1129.4,492.0 1127.6,493.0 1125.9,493.5 1124.2,493.4" fill="url(#cylg)" stroke="#2a2a2a" stroke-width="1.1" stroke-linejoin="round"/>
<line x1="1078.1" y1="484.5" x2="1080.6" y2="485.0" stroke="#262626" stroke-width="1.15"/>
<line x1="1075.9" y1="483.2" x2="1078.5" y2="483.7" stroke="#262626" stroke-width="1.15"/>
<line x1="1074.1" y1="480.9" x2="1076.6" y2="481.4" stroke="#262626" stroke-width="1.15"/>
<line x1="1072.5" y1="477.9" x2="1075.1" y2="478.3" stroke="#262626" stroke-width="1.15"/>
<line x1="1071.4" y1="474.0" x2="1073.9" y2="474.5" stroke="#262626" stroke-width="1.15"/>
<line x1="1070.6" y1="469.6" x2="1073.2" y2="470.1" stroke="#262626" stroke-width="1.15"/>
<line x1="1070.3" y1="464.7" x2="1072.9" y2="465.2" stroke="#262626" stroke-width="1.15"/>
<line x1="1070.5" y1="459.6" x2="1073.0" y2="460.0" stroke="#262626" stroke-width="1.15"/>
<line x1="1072.1" y1="449.1" x2="1074.7" y2="449.6" stroke="#262626" stroke-width="1.15"/>
<line x1="1073.6" y1="444.1" x2="1076.1" y2="444.6" stroke="#262626" stroke-width="1.15"/>
<line x1="1075.4" y1="439.5" x2="1077.9" y2="440.0" stroke="#262626" stroke-width="1.15"/>
<line x1="1077.4" y1="435.6" x2="1080.0" y2="436.1" stroke="#262626" stroke-width="1.15"/>
<line x1="1079.7" y1="432.3" x2="1082.3" y2="432.8" stroke="#262626" stroke-width="1.15"/>
<line x1="1082.2" y1="429.8" x2="1084.7" y2="430.3" stroke="#262626" stroke-width="1.15"/>
<line x1="1084.6" y1="428.3" x2="1087.2" y2="428.8" stroke="#262626" stroke-width="1.15"/>
<line x1="1087.1" y1="427.7" x2="1089.6" y2="428.2" stroke="#262626" stroke-width="1.15"/>
<line x1="1084.5" y1="485.7" x2="1087.1" y2="486.2" stroke="#262626" stroke-width="1.15"/>
<line x1="1082.4" y1="484.4" x2="1084.9" y2="484.9" stroke="#262626" stroke-width="1.15"/>
<line x1="1080.5" y1="482.2" x2="1083.0" y2="482.7" stroke="#262626" stroke-width="1.15"/>
<line x1="1078.9" y1="479.1" x2="1081.5" y2="479.6" stroke="#262626" stroke-width="1.15"/>
<line x1="1077.8" y1="475.3" x2="1080.3" y2="475.8" stroke="#262626" stroke-width="1.15"/>
<line x1="1077.0" y1="470.8" x2="1079.6" y2="471.3" stroke="#262626" stroke-width="1.15"/>
<line x1="1076.7" y1="466.0" x2="1079.3" y2="466.4" stroke="#262626" stroke-width="1.15"/>
<line x1="1076.9" y1="460.8" x2="1079.5" y2="461.3" stroke="#262626" stroke-width="1.15"/>
<line x1="1078.6" y1="450.3" x2="1081.1" y2="450.8" stroke="#262626" stroke-width="1.15"/>
<line x1="1080.0" y1="445.3" x2="1082.6" y2="445.8" stroke="#262626" stroke-width="1.15"/>
<line x1="1081.8" y1="440.8" x2="1084.3" y2="441.3" stroke="#262626" stroke-width="1.15"/>
<line x1="1083.9" y1="436.8" x2="1086.4" y2="437.3" stroke="#262626" stroke-width="1.15"/>
<line x1="1086.2" y1="433.5" x2="1088.7" y2="434.0" stroke="#262626" stroke-width="1.15"/>
<line x1="1088.6" y1="431.1" x2="1091.1" y2="431.6" stroke="#262626" stroke-width="1.15"/>
<line x1="1091.1" y1="429.5" x2="1093.6" y2="430.0" stroke="#262626" stroke-width="1.15"/>
<line x1="1093.5" y1="428.9" x2="1096.1" y2="429.4" stroke="#262626" stroke-width="1.15"/>
<line x1="1090.9" y1="487.0" x2="1093.5" y2="487.5" stroke="#262626" stroke-width="1.15"/>
<line x1="1088.8" y1="485.6" x2="1091.3" y2="486.1" stroke="#262626" stroke-width="1.15"/>
<line x1="1086.9" y1="483.4" x2="1089.5" y2="483.9" stroke="#262626" stroke-width="1.15"/>
<line x1="1085.4" y1="480.3" x2="1087.9" y2="480.8" stroke="#262626" stroke-width="1.15"/>
<line x1="1084.2" y1="476.5" x2="1086.8" y2="477.0" stroke="#262626" stroke-width="1.15"/>
<line x1="1083.5" y1="472.1" x2="1086.0" y2="472.6" stroke="#262626" stroke-width="1.15"/>
<line x1="1083.2" y1="467.2" x2="1085.7" y2="467.7" stroke="#262626" stroke-width="1.15"/>
<line x1="1083.3" y1="462.0" x2="1085.9" y2="462.5" stroke="#262626" stroke-width="1.15"/>
<line x1="1085.0" y1="451.5" x2="1087.5" y2="452.0" stroke="#262626" stroke-width="1.15"/>
<line x1="1086.4" y1="446.6" x2="1089.0" y2="447.1" stroke="#262626" stroke-width="1.15"/>
<line x1="1088.2" y1="442.0" x2="1090.8" y2="442.5" stroke="#262626" stroke-width="1.15"/>
<line x1="1090.3" y1="438.0" x2="1092.8" y2="438.5" stroke="#262626" stroke-width="1.15"/>
<line x1="1092.6" y1="434.8" x2="1095.1" y2="435.2" stroke="#262626" stroke-width="1.15"/>
<line x1="1095.0" y1="432.3" x2="1097.6" y2="432.8" stroke="#262626" stroke-width="1.15"/>
<line x1="1097.5" y1="430.7" x2="1100.0" y2="431.2" stroke="#262626" stroke-width="1.15"/>
<line x1="1099.9" y1="430.1" x2="1102.5" y2="430.6" stroke="#262626" stroke-width="1.15"/>
<line x1="1097.3" y1="488.2" x2="1099.9" y2="488.7" stroke="#262626" stroke-width="1.15"/>
<line x1="1095.2" y1="486.9" x2="1097.8" y2="487.4" stroke="#262626" stroke-width="1.15"/>
<line x1="1093.3" y1="484.6" x2="1095.9" y2="485.1" stroke="#262626" stroke-width="1.15"/>
<line x1="1091.8" y1="481.5" x2="1094.3" y2="482.0" stroke="#262626" stroke-width="1.15"/>
<line x1="1090.6" y1="477.7" x2="1093.2" y2="478.2" stroke="#262626" stroke-width="1.15"/>
<line x1="1089.9" y1="473.3" x2="1092.4" y2="473.8" stroke="#262626" stroke-width="1.15"/>
<line x1="1089.6" y1="468.4" x2="1092.1" y2="468.9" stroke="#262626" stroke-width="1.15"/>
<line x1="1089.8" y1="463.3" x2="1092.3" y2="463.7" stroke="#262626" stroke-width="1.15"/>
<line x1="1091.4" y1="452.8" x2="1094.0" y2="453.3" stroke="#262626" stroke-width="1.15"/>
<line x1="1092.9" y1="447.8" x2="1095.4" y2="448.3" stroke="#262626" stroke-width="1.15"/>
<line x1="1094.6" y1="443.2" x2="1097.2" y2="443.7" stroke="#262626" stroke-width="1.15"/>
<line x1="1096.7" y1="439.3" x2="1099.3" y2="439.8" stroke="#262626" stroke-width="1.15"/>
<line x1="1099.0" y1="436.0" x2="1101.6" y2="436.5" stroke="#262626" stroke-width="1.15"/>
<line x1="1101.4" y1="433.5" x2="1104.0" y2="434.0" stroke="#262626" stroke-width="1.15"/>
<line x1="1103.9" y1="432.0" x2="1106.5" y2="432.5" stroke="#262626" stroke-width="1.15"/>
<line x1="1106.3" y1="431.4" x2="1108.9" y2="431.9" stroke="#262626" stroke-width="1.15"/>
<line x1="1103.8" y1="489.4" x2="1106.3" y2="489.9" stroke="#262626" stroke-width="1.15"/>
<line x1="1101.6" y1="488.1" x2="1104.2" y2="488.6" stroke="#262626" stroke-width="1.15"/>
<line x1="1099.8" y1="485.9" x2="1102.3" y2="486.4" stroke="#262626" stroke-width="1.15"/>
<line x1="1098.2" y1="482.8" x2="1100.8" y2="483.3" stroke="#262626" stroke-width="1.15"/>
<line x1="1097.0" y1="479.0" x2="1099.6" y2="479.4" stroke="#262626" stroke-width="1.15"/>
<line x1="1096.3" y1="474.5" x2="1098.9" y2="475.0" stroke="#262626" stroke-width="1.15"/>
<line x1="1096.0" y1="469.7" x2="1098.6" y2="470.1" stroke="#262626" stroke-width="1.15"/>
<line x1="1096.2" y1="464.5" x2="1098.7" y2="465.0" stroke="#262626" stroke-width="1.15"/>
<line x1="1097.8" y1="454.0" x2="1100.4" y2="454.5" stroke="#262626" stroke-width="1.15"/>
<line x1="1099.3" y1="449.0" x2="1101.8" y2="449.5" stroke="#262626" stroke-width="1.15"/>
<line x1="1101.1" y1="444.5" x2="1103.6" y2="445.0" stroke="#262626" stroke-width="1.15"/>
<line x1="1103.1" y1="440.5" x2="1105.7" y2="441.0" stroke="#262626" stroke-width="1.15"/>
<line x1="1105.4" y1="437.2" x2="1108.0" y2="437.7" stroke="#262626" stroke-width="1.15"/>
<line x1="1107.8" y1="434.8" x2="1110.4" y2="435.3" stroke="#262626" stroke-width="1.15"/>
<line x1="1110.3" y1="433.2" x2="1112.9" y2="433.7" stroke="#262626" stroke-width="1.15"/>
<line x1="1112.8" y1="432.6" x2="1115.3" y2="433.1" stroke="#262626" stroke-width="1.15"/>
<line x1="1110.2" y1="490.7" x2="1112.7" y2="491.2" stroke="#262626" stroke-width="1.15"/>
<line x1="1108.1" y1="489.3" x2="1110.6" y2="489.8" stroke="#262626" stroke-width="1.15"/>
<line x1="1106.2" y1="487.1" x2="1108.7" y2="487.6" stroke="#262626" stroke-width="1.15"/>
<line x1="1104.6" y1="484.0" x2="1107.2" y2="484.5" stroke="#262626" stroke-width="1.15"/>
<line x1="1103.5" y1="480.2" x2="1106.0" y2="480.7" stroke="#262626" stroke-width="1.15"/>
<line x1="1102.7" y1="475.8" x2="1105.3" y2="476.3" stroke="#262626" stroke-width="1.15"/>
<line x1="1102.4" y1="470.9" x2="1105.0" y2="471.4" stroke="#262626" stroke-width="1.15"/>
<line x1="1102.6" y1="465.7" x2="1105.2" y2="466.2" stroke="#262626" stroke-width="1.15"/>
<line x1="1104.3" y1="455.2" x2="1106.8" y2="455.7" stroke="#262626" stroke-width="1.15"/>
<line x1="1105.7" y1="450.3" x2="1108.3" y2="450.7" stroke="#262626" stroke-width="1.15"/>
<line x1="1107.5" y1="445.7" x2="1110.0" y2="446.2" stroke="#262626" stroke-width="1.15"/>
<line x1="1109.6" y1="441.7" x2="1112.1" y2="442.2" stroke="#262626" stroke-width="1.15"/>
<line x1="1111.8" y1="438.5" x2="1114.4" y2="438.9" stroke="#262626" stroke-width="1.15"/>
<line x1="1114.3" y1="436.0" x2="1116.8" y2="436.5" stroke="#262626" stroke-width="1.15"/>
<line x1="1116.7" y1="434.4" x2="1119.3" y2="434.9" stroke="#262626" stroke-width="1.15"/>
<line x1="1119.2" y1="433.8" x2="1121.7" y2="434.3" stroke="#262626" stroke-width="1.15"/>
<line x1="1116.6" y1="491.9" x2="1119.2" y2="492.4" stroke="#262626" stroke-width="1.15"/>
<line x1="1114.5" y1="490.6" x2="1117.0" y2="491.1" stroke="#262626" stroke-width="1.15"/>
<line x1="1112.6" y1="488.3" x2="1115.2" y2="488.8" stroke="#262626" stroke-width="1.15"/>
<line x1="1111.1" y1="485.2" x2="1113.6" y2="485.7" stroke="#262626" stroke-width="1.15"/>
<line x1="1109.9" y1="481.4" x2="1112.4" y2="481.9" stroke="#262626" stroke-width="1.15"/>
<line x1="1109.2" y1="477.0" x2="1111.7" y2="477.5" stroke="#262626" stroke-width="1.15"/>
<line x1="1108.9" y1="472.1" x2="1111.4" y2="472.6" stroke="#262626" stroke-width="1.15"/>
<line x1="1109.0" y1="466.9" x2="1111.6" y2="467.4" stroke="#262626" stroke-width="1.15"/>
<line x1="1110.7" y1="456.5" x2="1113.2" y2="456.9" stroke="#262626" stroke-width="1.15"/>
<line x1="1112.1" y1="451.5" x2="1114.7" y2="452.0" stroke="#262626" stroke-width="1.15"/>
<line x1="1113.9" y1="446.9" x2="1116.5" y2="447.4" stroke="#262626" stroke-width="1.15"/>
<line x1="1116.0" y1="443.0" x2="1118.5" y2="443.4" stroke="#262626" stroke-width="1.15"/>
<line x1="1118.3" y1="439.7" x2="1120.8" y2="440.2" stroke="#262626" stroke-width="1.15"/>
<line x1="1120.7" y1="437.2" x2="1123.2" y2="437.7" stroke="#262626" stroke-width="1.15"/>
<line x1="1123.2" y1="435.7" x2="1125.7" y2="436.2" stroke="#262626" stroke-width="1.15"/>
<line x1="1125.6" y1="435.1" x2="1128.2" y2="435.6" stroke="#262626" stroke-width="1.15"/>
<line x1="1067.7" y1="459.1" x2="1117.2" y2="468.7" stroke="#2c2c2c" stroke-width="0.9"/>
<ellipse cx="1128.7" cy="464.9" rx="12.8" ry="28.9" transform="rotate(9 1128.7 464.9)" fill="url(#capg)" stroke="#2a2a2a" stroke-width="1"/>
<ellipse cx="1129.0" cy="464.9" rx="9.2" ry="23.1" transform="rotate(9 1128.7 464.9)" fill="#3e3e3e" opacity="0.85"/>
<path d="M1126.5,447 C1131,452 1131.5,460 1128.5,466 C1126,471 1126.5,478 1130,484" fill="none" stroke="#6c6c6c" stroke-width="2.6" stroke-linecap="round" opacity="0.5"/>
<path d="M1123.5,455 C1122,463 1122.5,472 1125,480" fill="none" stroke="#2c2c2c" stroke-width="2.2" stroke-linecap="round" opacity="0.7"/>
<path d="M1133.5,452 C1136,460 1136,470 1134,478" fill="none" stroke="#5d6770" stroke-width="1.6" stroke-linecap="round" opacity="0.8"/>
<defs><linearGradient id="psur" x1="0" y1="0" x2="0.25" y2="1"><stop offset="0" stop-color="#282828"/><stop offset="0.55" stop-color="#212121"/><stop offset="0.63" stop-color="#101010"/><stop offset="0.85" stop-color="#161616"/><stop offset="1" stop-color="#222"/></linearGradient><linearGradient id="psur2" x1="0" y1="0" x2="1" y2="0"><stop offset="0.6" stop-color="#000" stop-opacity="0"/><stop offset="1" stop-color="#000" stop-opacity="0.75"/></linearGradient></defs>
<polygon points="1064.4,524.6 1105.5,502.4 1165.6,510.7 1119.9,536.0" fill="#3c3c3c"/>
<polygon points="1119.9,536.0 1165.6,510.7 1162.8,597.6 1115.6,628.5" fill="url(#psur)"/>
<polygon points="1142.0,523.8 1165.6,510.7 1164.6,545.0 1152.0,540.0" fill="url(#psur2)"/>
<polygon points="1064.4,524.6 1119.9,536.0 1115.6,628.5 1060.7,615.2" fill="#4d4d4d"/>
<polygon points="1079.9,548.2 1087.1,549.7 1086.5,562.5 1079.4,561.0" fill="#3b3b3b"/>
<polygon points="1080.5,548.8 1083.2,549.4 1083.1,550.5 1080.4,549.9" fill="#7a7a7a" opacity="0.8"/>
<polygon points="1083.8,549.5 1086.6,550.1 1086.5,551.2 1083.8,550.6" fill="#747474" opacity="0.8"/>
<polygon points="1080.4,551.4 1083.1,551.9 1083.0,553.0 1080.3,552.5" fill="#7a7a7a" opacity="0.8"/>
<polygon points="1083.7,552.1 1086.5,552.7 1086.4,553.8 1083.7,553.2" fill="#747474" opacity="0.8"/>
<polygon points="1080.2,553.9 1083.0,554.5 1082.9,555.6 1080.2,555.0" fill="#7a7a7a" opacity="0.8"/>
<polygon points="1083.6,554.7 1086.3,555.2 1086.3,556.3 1083.6,555.8" fill="#747474" opacity="0.8"/>
<polygon points="1080.1,556.5 1082.8,557.1 1082.8,558.2 1080.1,557.6" fill="#7a7a7a" opacity="0.8"/>
<polygon points="1083.5,557.2 1086.2,557.8 1086.2,558.9 1083.5,558.3" fill="#747474" opacity="0.8"/>
<polygon points="1080.0,559.1 1082.7,559.6 1082.7,560.7 1080.0,560.1" fill="#7a7a7a" opacity="0.8"/>
<polygon points="1083.4,559.8 1086.1,560.4 1086.1,561.5 1083.4,560.9" fill="#747474" opacity="0.8"/>
<polygon points="1079.2,564.6 1086.4,566.2 1085.6,584.5 1078.5,582.9" fill="#3b3b3b"/>
<polygon points="1079.8,565.3 1082.5,565.9 1082.4,567.0 1079.7,566.4" fill="#7a7a7a" opacity="0.8"/>
<polygon points="1083.1,566.0 1085.9,566.6 1085.8,567.7 1083.1,567.1" fill="#747474" opacity="0.8"/>
<polygon points="1079.6,567.9 1082.4,568.5 1082.3,569.6 1079.6,569.0" fill="#7a7a7a" opacity="0.8"/>
<polygon points="1083.0,568.6 1085.7,569.2 1085.7,570.3 1083.0,569.7" fill="#747474" opacity="0.8"/>
<polygon points="1079.5,570.5 1082.2,571.1 1082.2,572.2 1079.5,571.6" fill="#7a7a7a" opacity="0.8"/>
<polygon points="1082.9,571.2 1085.6,571.8 1085.6,572.9 1082.9,572.3" fill="#747474" opacity="0.8"/>
<polygon points="1079.4,573.1 1082.1,573.7 1082.1,574.8 1079.4,574.2" fill="#7a7a7a" opacity="0.8"/>
<polygon points="1082.8,573.9 1085.5,574.5 1085.5,575.6 1082.8,574.9" fill="#747474" opacity="0.8"/>
<polygon points="1079.3,575.7 1082.0,576.3 1082.0,577.4 1079.3,576.8" fill="#7a7a7a" opacity="0.8"/>
<polygon points="1082.7,576.5 1085.4,577.1 1085.4,578.2 1082.6,577.6" fill="#747474" opacity="0.8"/>
<polygon points="1079.2,578.3 1081.9,578.9 1081.9,580.0 1079.2,579.4" fill="#7a7a7a" opacity="0.8"/>
<polygon points="1082.6,579.1 1085.3,579.7 1085.2,580.8 1082.5,580.2" fill="#747474" opacity="0.8"/>
<polygon points="1079.1,580.9 1081.8,581.5 1081.8,582.6 1079.0,582.0" fill="#7a7a7a" opacity="0.8"/>
<polygon points="1082.5,581.7 1085.2,582.3 1085.1,583.4 1082.4,582.8" fill="#747474" opacity="0.8"/>
<polygon points="1078.3,585.6 1085.5,587.2 1084.7,604.5 1077.6,602.8" fill="#3b3b3b"/>
<polygon points="1078.9,586.2 1081.6,586.8 1081.5,587.9 1078.8,587.3" fill="#7a7a7a" opacity="0.8"/>
<polygon points="1082.2,587.0 1084.9,587.6 1084.9,588.7 1082.2,588.1" fill="#747474" opacity="0.8"/>
<polygon points="1078.8,588.7 1081.5,589.3 1081.4,590.4 1078.7,589.8" fill="#7a7a7a" opacity="0.8"/>
<polygon points="1082.1,589.5 1084.8,590.1 1084.8,591.2 1082.1,590.5" fill="#747474" opacity="0.8"/>
<polygon points="1078.7,591.1 1081.4,591.8 1081.3,592.9 1078.6,592.2" fill="#7a7a7a" opacity="0.8"/>
<polygon points="1082.0,591.9 1084.7,592.6 1084.7,593.6 1082.0,593.0" fill="#747474" opacity="0.8"/>
<polygon points="1078.6,593.6 1081.3,594.2 1081.2,595.3 1078.5,594.7" fill="#7a7a7a" opacity="0.8"/>
<polygon points="1081.9,594.4 1084.6,595.0 1084.6,596.1 1081.9,595.5" fill="#747474" opacity="0.8"/>
<polygon points="1078.4,596.1 1081.1,596.7 1081.1,597.8 1078.4,597.2" fill="#7a7a7a" opacity="0.8"/>
<polygon points="1081.8,596.9 1084.5,597.5 1084.5,598.6 1081.8,598.0" fill="#747474" opacity="0.8"/>
<polygon points="1078.3,598.5 1081.0,599.2 1081.0,600.3 1078.3,599.6" fill="#7a7a7a" opacity="0.8"/>
<polygon points="1081.7,599.3 1084.4,600.0 1084.4,601.1 1081.7,600.4" fill="#747474" opacity="0.8"/>
<polygon points="1078.2,601.0 1080.9,601.6 1080.9,602.7 1078.2,602.1" fill="#7a7a7a" opacity="0.8"/>
<polygon points="1081.6,601.8 1084.3,602.4 1084.3,603.5 1081.6,602.9" fill="#747474" opacity="0.8"/>
<polygon points="1091.0,550.5 1098.2,552.1 1097.6,565.0 1090.4,563.4" fill="#3b3b3b"/>
<polygon points="1091.5,551.2 1094.2,551.7 1094.2,552.8 1091.4,552.3" fill="#7a7a7a" opacity="0.8"/>
<polygon points="1094.9,551.9 1097.6,552.5 1097.6,553.6 1094.9,553.0" fill="#747474" opacity="0.8"/>
<polygon points="1091.4,553.7 1094.1,554.3 1094.1,555.4 1091.3,554.8" fill="#7a7a7a" opacity="0.8"/>
<polygon points="1094.8,554.5 1097.5,555.1 1097.5,556.2 1094.7,555.6" fill="#747474" opacity="0.8"/>
<polygon points="1091.3,556.3 1094.0,556.9 1094.0,558.0 1091.2,557.4" fill="#7a7a7a" opacity="0.8"/>
<polygon points="1094.7,557.0 1097.4,557.6 1097.4,558.7 1094.6,558.1" fill="#747474" opacity="0.8"/>
<polygon points="1091.2,558.9 1093.9,559.5 1093.8,560.6 1091.1,560.0" fill="#7a7a7a" opacity="0.8"/>
<polygon points="1094.6,559.6 1097.3,560.2 1097.3,561.3 1094.5,560.7" fill="#747474" opacity="0.8"/>
<polygon points="1091.0,561.5 1093.8,562.0 1093.7,563.2 1091.0,562.6" fill="#7a7a7a" opacity="0.8"/>
<polygon points="1094.4,562.2 1097.2,562.8 1097.1,563.9 1094.4,563.3" fill="#747474" opacity="0.8"/>
<polygon points="1090.2,567.1 1097.4,568.6 1096.6,587.0 1089.4,585.4" fill="#3b3b3b"/>
<polygon points="1090.8,567.7 1093.5,568.3 1093.5,569.4 1090.7,568.8" fill="#7a7a7a" opacity="0.8"/>
<polygon points="1094.2,568.5 1096.9,569.1 1096.9,570.2 1094.1,569.6" fill="#747474" opacity="0.8"/>
<polygon points="1090.7,570.3 1093.4,570.9 1093.3,572.0 1090.6,571.4" fill="#7a7a7a" opacity="0.8"/>
<polygon points="1094.1,571.1 1096.8,571.7 1096.7,572.8 1094.0,572.2" fill="#747474" opacity="0.8"/>
<polygon points="1090.5,572.9 1093.3,573.5 1093.2,574.6 1090.5,574.0" fill="#7a7a7a" opacity="0.8"/>
<polygon points="1093.9,573.7 1096.7,574.3 1096.6,575.4 1093.9,574.8" fill="#747474" opacity="0.8"/>
<polygon points="1090.4,575.6 1093.2,576.2 1093.1,577.3 1090.4,576.7" fill="#7a7a7a" opacity="0.8"/>
<polygon points="1093.8,576.3 1096.6,576.9 1096.5,578.0 1093.8,577.4" fill="#747474" opacity="0.8"/>
<polygon points="1090.3,578.2 1093.0,578.8 1093.0,579.9 1090.3,579.3" fill="#7a7a7a" opacity="0.8"/>
<polygon points="1093.7,578.9 1096.4,579.6 1096.4,580.7 1093.7,580.0" fill="#747474" opacity="0.8"/>
<polygon points="1090.2,580.8 1092.9,581.4 1092.9,582.5 1090.1,581.9" fill="#7a7a7a" opacity="0.8"/>
<polygon points="1093.6,581.6 1096.3,582.2 1096.3,583.3 1093.5,582.7" fill="#747474" opacity="0.8"/>
<polygon points="1090.1,583.4 1092.8,584.0 1092.8,585.1 1090.0,584.5" fill="#7a7a7a" opacity="0.8"/>
<polygon points="1093.5,584.2 1096.2,584.8 1096.2,585.9 1093.4,585.3" fill="#747474" opacity="0.8"/>
<polygon points="1089.3,588.1 1096.5,589.7 1095.7,607.1 1088.6,605.4" fill="#3b3b3b"/>
<polygon points="1089.8,588.7 1092.6,589.4 1092.5,590.4 1089.8,589.8" fill="#7a7a7a" opacity="0.8"/>
<polygon points="1093.2,589.5 1096.0,590.1 1095.9,591.2 1093.2,590.6" fill="#747474" opacity="0.8"/>
<polygon points="1089.7,591.2 1092.5,591.8 1092.4,592.9 1089.7,592.3" fill="#7a7a7a" opacity="0.8"/>
<polygon points="1093.1,592.0 1095.9,592.6 1095.8,593.7 1093.1,593.1" fill="#747474" opacity="0.8"/>
<polygon points="1089.6,593.7 1092.4,594.3 1092.3,595.4 1089.6,594.8" fill="#7a7a7a" opacity="0.8"/>
<polygon points="1093.0,594.5 1095.8,595.1 1095.7,596.2 1093.0,595.6" fill="#747474" opacity="0.8"/>
<polygon points="1089.5,596.2 1092.2,596.8 1092.2,597.9 1089.5,597.3" fill="#7a7a7a" opacity="0.8"/>
<polygon points="1092.9,596.9 1095.6,597.6 1095.6,598.7 1092.9,598.0" fill="#747474" opacity="0.8"/>
<polygon points="1089.4,598.6 1092.1,599.3 1092.1,600.4 1089.4,599.7" fill="#7a7a7a" opacity="0.8"/>
<polygon points="1092.8,599.4 1095.5,600.1 1095.5,601.2 1092.8,600.5" fill="#747474" opacity="0.8"/>
<polygon points="1089.3,601.1 1092.0,601.7 1092.0,602.8 1089.3,602.2" fill="#7a7a7a" opacity="0.8"/>
<polygon points="1092.7,601.9 1095.4,602.5 1095.4,603.6 1092.6,603.0" fill="#747474" opacity="0.8"/>
<polygon points="1089.2,603.6 1091.9,604.2 1091.9,605.3 1089.2,604.7" fill="#7a7a7a" opacity="0.8"/>
<polygon points="1092.6,604.4 1095.3,605.0 1095.3,606.1 1092.5,605.5" fill="#747474" opacity="0.8"/>
<polygon points="1074.3,549.7 1077.1,550.3 1077.0,552.2 1074.3,551.6" fill="#2e2e2e"/>
<polygon points="1072.2,574.1 1074.9,574.7 1074.9,576.5 1072.1,575.9" fill="#2e2e2e"/>
<polygon points="1070.7,597.6 1073.4,598.2 1073.3,600.0 1070.6,599.4" fill="#2e2e2e"/>
<polygon points="1101.9,557.5 1104.7,558.1 1104.6,560.0 1101.8,559.4" fill="#2e2e2e"/>
<polygon points="1100.5,574.9 1103.3,575.5 1103.2,577.4 1100.4,576.7" fill="#2e2e2e"/>
<polygon points="1099.2,591.3 1102.0,591.9 1101.9,593.8 1099.2,593.1" fill="#2e2e2e"/>
<polygon points="1097.9,608.5 1100.7,609.2 1100.6,611.0 1097.8,610.4" fill="#2e2e2e"/>
<polygon points="1086.1,534.6 1087.7,535.0 1087.2,546.9 1085.6,546.6" fill="#8a8a8a" opacity="0.7"/>
<polygon points="1089.8,539.1 1091.2,539.4 1090.8,546.8 1089.5,546.5" fill="#858585" opacity="0.7"/>
<polygon points="1066.7,575.6 1068.3,576.0 1067.7,590.5 1066.1,590.1" fill="#808080" opacity="0.7"/>
<polygon points="1105.4,579.7 1106.8,580.0 1105.3,613.1 1103.9,612.7" fill="#7c7c7c" opacity="0.6"/>
<g stroke="#1a1a1a" stroke-width="0.9" fill="none"><polyline points="1064.4,524.6 1119.9,536 1115.6,628.5"/><line x1="1119.9" y1="536" x2="1165.6" y2="510.7"/><polyline points="1064.4,524.6 1060.7,615.2 1115.6,628.5"/></g>
<line x1="1115.6" y1="628.5" x2="1162.8" y2="597.6" stroke="#8c8c8c" stroke-width="0.8" stroke-dasharray="2 2" opacity="0.5"/>
<defs><linearGradient id="gpus" x1="0" y1="0" x2="1" y2="0"><stop offset="0" stop-color="#5a5a5a"/><stop offset="0.19" stop-color="#505051"/><stop offset="0.2" stop-color="#3e3e40"/><stop offset="0.55" stop-color="#3b3b3d"/><stop offset="1" stop-color="#444446"/></linearGradient><filter id="blur1" x="-5%" y="-5%" width="110%" height="110%"><feGaussianBlur stdDeviation="0.9"/></filter><clipPath id="gsclip"><polygon points="1025.5,280.6 1152.6,249.5 1151.0,350.5 1023.3,397.7" fill="#000"/></clipPath></defs>
<polygon points="984.5,276.4 1025.5,280.6 1023.3,397.7 982.3,390.9" fill="#5a5a5a"/>
<polygon points="1025.5,280.6 1152.6,249.5 1151.0,350.5 1023.3,397.7" fill="url(#gpus)"/>
<g clip-path="url(#gsclip)"><g filter="url(#blur1)">
<polygon points="1090.0,341.8 1091.0,341.5 1090.9,346.9 1089.9,347.3" fill="#58585a" opacity="0.7"/>
<polygon points="1047.8,307.4 1050.6,306.6 1050.4,318.0 1047.6,318.8" fill="#6e6e6e" opacity="0.7"/>
<polygon points="1045.5,276.9 1049.7,275.9 1049.6,281.6 1045.4,282.6" fill="#808080" opacity="0.7"/>
<polygon points="1094.3,304.0 1095.3,303.7 1094.8,336.2 1093.7,336.5" fill="#6a6a6a" opacity="0.7"/>
<polygon points="1080.7,284.0 1081.7,283.7 1081.4,303.5 1080.3,303.7" fill="#7a7a7a" opacity="0.7"/>
<polygon points="1038.1,296.1 1041.0,295.3 1040.6,316.0 1037.7,316.8" fill="#444444" opacity="0.7"/>
<polygon points="1073.0,295.0 1074.1,294.7 1073.5,327.9 1072.4,328.3" fill="#4f4f51" opacity="0.7"/>
<polygon points="1076.5,316.8 1080.5,315.6 1080.3,326.6 1076.3,327.8" fill="#4f4f51" opacity="0.7"/>
<polygon points="1082.1,310.4 1083.7,310.0 1083.6,315.5 1082.0,315.9" fill="#2b2b2d" opacity="0.7"/>
<polygon points="1032.9,282.2 1035.8,281.4 1035.4,302.2 1032.5,303.0" fill="#363636" opacity="0.7"/>
<polygon points="1049.6,306.1 1052.4,305.3 1052.0,325.8 1049.2,326.6" fill="#8c8c8c" opacity="0.7"/>
<polygon points="1065.3,292.4 1066.4,292.1 1066.3,297.7 1065.2,298.0" fill="#7a7a7a" opacity="0.7"/>
<polygon points="1081.9,307.2 1084.5,306.4 1084.3,317.4 1081.7,318.2" fill="#7a7a7a" opacity="0.7"/>
<polygon points="1067.4,349.1 1069.0,348.6 1068.4,382.1 1066.8,382.6" fill="#2b2b2d" opacity="0.7"/>
<polygon points="1029.1,315.9 1030.2,315.5 1030.0,327.2 1028.9,327.5" fill="#6e6e6e" opacity="0.7"/>
<polygon points="1073.9,349.3 1074.9,348.9 1074.3,382.2 1073.3,382.6" fill="#7a7a7a" opacity="0.7"/>
<polygon points="1032.5,280.3 1036.9,279.2 1036.2,313.8 1031.9,315.1" fill="#808080" opacity="0.7"/>
<polygon points="1030.5,319.8 1032.3,319.3 1031.6,354.1 1029.9,354.7" fill="#6e6e6e" opacity="0.7"/>
<polygon points="1031.6,327.3 1033.3,326.8 1033.1,338.4 1031.3,338.9" fill="#808080" opacity="0.7"/>
<polygon points="1055.3,349.3 1059.4,348.0 1059.1,368.3 1055.0,369.7" fill="#7a7a7a" opacity="0.7"/>
<polygon points="1088.0,331.5 1091.8,330.3 1091.7,335.7 1087.9,337.0" fill="#7a7a7a" opacity="0.7"/>
<polygon points="1092.4,336.9 1093.9,336.4 1093.6,355.9 1092.1,356.4" fill="#333335" opacity="0.7"/>
<polygon points="1054.6,338.7 1055.8,338.3 1055.4,358.7 1054.3,359.1" fill="#2b2b2d" opacity="0.7"/>
<polygon points="1027.2,292.3 1031.6,291.2 1031.4,302.8 1027.0,304.0" fill="#303030" opacity="0.7"/>
<polygon points="1030.6,328.1 1031.7,327.8 1031.5,339.4 1030.3,339.7" fill="#8c8c8c" opacity="0.7"/>
<polygon points="1081.5,347.9 1084.1,347.0 1084.0,352.5 1081.4,353.4" fill="#6a6a6a" opacity="0.7"/>
<polygon points="1052.3,340.6 1054.0,340.0 1053.3,374.1 1051.7,374.7" fill="#303030" opacity="0.7"/>
<polygon points="1026.7,337.3 1031.1,336.0 1031.0,341.8 1026.6,343.1" fill="#303030" opacity="0.7"/>
<polygon points="1045.3,326.7 1047.0,326.2 1046.6,346.8 1044.9,347.3" fill="#808080" opacity="0.7"/>
<polygon points="1042.4,281.8 1046.7,280.7 1046.0,315.0 1041.8,316.2" fill="#808080" opacity="0.7"/>
<polygon points="1073.5,318.9 1076.1,318.1 1075.7,338.0 1073.1,338.9" fill="#333335" opacity="0.7"/>
<polygon points="1051.0,300.0 1053.8,299.2 1053.6,310.6 1050.8,311.3" fill="#808080" opacity="0.7"/>
<polygon points="1055.3,342.2 1059.4,340.9 1059.0,361.2 1054.9,362.6" fill="#58585a" opacity="0.7"/>
<polygon points="1046.2,283.1 1047.9,282.7 1047.5,303.2 1045.8,303.7" fill="#6e6e6e" opacity="0.7"/>
<polygon points="1062.3,280.8 1066.3,279.8 1066.2,285.4 1062.2,286.5" fill="#6a6a6a" opacity="0.7"/>
<polygon points="1066.2,307.5 1067.3,307.2 1067.0,327.3 1065.9,327.6" fill="#262628" opacity="0.7"/>
<polygon points="1086.0,286.0 1089.9,284.9 1089.8,290.4 1085.9,291.4" fill="#333335" opacity="0.7"/>
<polygon points="1083.0,289.1 1085.6,288.4 1085.4,299.3 1082.9,300.0" fill="#58585a" opacity="0.7"/>
<polygon points="1085.3,273.3 1089.2,272.4 1088.9,291.9 1085.0,293.0" fill="#6a6a6a" opacity="0.7"/>
<polygon points="1094.4,314.2 1096.0,313.7 1095.9,319.1 1094.4,319.6" fill="#2b2b2d" opacity="0.7"/>
<polygon points="1090.2,279.6 1091.2,279.3 1091.0,290.2 1090.0,290.5" fill="#58585a" opacity="0.7"/>
<polygon points="1073.6,345.9 1076.3,345.0 1075.7,378.2 1073.0,379.2" fill="#7a7a7a" opacity="0.7"/>
<polygon points="1046.3,343.3 1047.4,342.9 1047.3,348.6 1046.2,349.0" fill="#363636" opacity="0.7"/>
<polygon points="1033.2,281.2 1036.1,280.5 1036.0,286.3 1033.1,287.0" fill="#6e6e6e" opacity="0.7"/>
<polygon points="1040.3,313.6 1043.2,312.8 1043.0,324.2 1040.1,325.1" fill="#363636" opacity="0.7"/>
<polygon points="1086.3,301.3 1088.9,300.5 1088.7,311.4 1086.1,312.2" fill="#7a7a7a" opacity="0.7"/>
<polygon points="1065.4,332.7 1069.5,331.4 1069.3,342.6 1065.2,343.9" fill="#6a6a6a" opacity="0.7"/>
<polygon points="1052.5,339.5 1053.6,339.2 1053.0,373.2 1051.9,373.6" fill="#444444" opacity="0.7"/>
<polygon points="1076.7,330.6 1078.3,330.1 1078.1,341.1 1076.5,341.6" fill="#6a6a6a" opacity="0.7"/>
<polygon points="1055.5,278.2 1058.3,277.5 1057.7,311.3 1054.9,312.1" fill="#333335" opacity="0.7"/>
<polygon points="1083.7,314.5 1087.5,313.4 1087.2,333.0 1083.3,334.3" fill="#4f4f51" opacity="0.7"/>
<polygon points="1093.2,266.9 1095.8,266.2 1095.2,298.6 1092.7,299.4" fill="#262628" opacity="0.7"/>
<polygon points="1037.3,348.5 1041.5,347.1 1041.4,352.8 1037.1,354.3" fill="#363636" opacity="0.7"/>
<polygon points="1070.2,337.2 1071.8,336.7 1071.2,370.1 1069.6,370.6" fill="#4f4f51" opacity="0.7"/>
<polygon points="1072.9,304.6 1073.9,304.3 1073.3,337.6 1072.3,337.9" fill="#262628" opacity="0.7"/>
<polygon points="1024.7,336.4 1027.6,335.5 1027.5,341.3 1024.6,342.3" fill="#808080" opacity="0.7"/>
<polygon points="1056.1,302.6 1058.9,301.9 1058.7,313.1 1055.9,313.9" fill="#4f4f51" opacity="0.7"/>
<polygon points="1069.3,275.2 1073.3,274.2 1073.2,279.7 1069.2,280.7" fill="#2b2b2d" opacity="0.7"/>
<polygon points="1055.8,331.1 1058.5,330.3 1058.4,335.9 1055.7,336.8" fill="#58585a" opacity="0.7"/>
<polygon points="1026.0,325.8 1027.8,325.3 1027.5,337.0 1025.8,337.5" fill="#444444" opacity="0.7"/>
<polygon points="1081.4,292.5 1083.9,291.8 1083.4,324.7 1080.8,325.5" fill="#333335" opacity="0.7"/>
<polygon points="1089.1,341.2 1091.7,340.4 1091.3,359.9 1088.8,360.8" fill="#7a7a7a" opacity="0.7"/>
<polygon points="1025.9,349.4 1027.7,348.8 1027.6,354.7 1025.8,355.2" fill="#6e6e6e" opacity="0.7"/>
<polygon points="1073.7,278.1 1076.4,277.4 1076.0,297.3 1073.4,298.0" fill="#2b2b2d" opacity="0.7"/>
<polygon points="1092.5,311.3 1093.5,311.0 1093.4,316.5 1092.4,316.8" fill="#7a7a7a" opacity="0.7"/>
<polygon points="1059.2,351.1 1060.3,350.7 1059.9,371.0 1058.8,371.4" fill="#6a6a6a" opacity="0.7"/>
<polygon points="1064.8,306.2 1065.8,305.9 1065.6,317.1 1064.6,317.4" fill="#7a7a7a" opacity="0.7"/>
<polygon points="1072.4,325.2 1074.0,324.7 1073.8,335.8 1072.2,336.3" fill="#262628" opacity="0.7"/>
<polygon points="1041.7,281.9 1043.4,281.4 1043.1,302.1 1041.4,302.5" fill="#363636" opacity="0.7"/>
<polygon points="1082.5,328.8 1086.4,327.6 1086.3,333.0 1082.4,334.3" fill="#7a7a7a" opacity="0.7"/>
<polygon points="1085.2,279.1 1086.7,278.7 1085.8,333.3 1084.2,333.8" fill="#8a5a3a" opacity="0.8"/>
<polygon points="1071.5,280.4 1072.8,280.1 1071.7,341.1 1070.4,341.5" fill="#5f6670" opacity="0.6"/>
<polygon points="1023.7,378.9 1095.9,357.4 1095.6,373.1 1023.3,400.0" fill="#a4a4a4"/>
<polygon points="1023.5,386.0 1085.6,366.0 1085.4,376.9 1023.3,400.0" fill="#b8b8b8"/>
<polygon points="1023.8,371.9 1096.0,351.5 1095.9,358.0 1023.6,380.1" fill="#7c7c7c" opacity="0.6"/>
<polygon points="1086.0,366.5 1151.0,342.5 1151.0,351.5 1086.0,375.5" fill="#8e8e8e"/>
<polygon points="1093.7,358.8 1132.5,345.4 1132.5,350.2 1093.7,363.6" fill="#a39068"/>
<polygon points="1087.4,359.5 1093.7,357.3 1093.7,364.3 1087.4,366.5" fill="#a38c5c"/>
<polygon points="1132.5,338.8 1134.5,338.2 1134.5,349.5 1132.5,350.2" fill="#c4c4c4"/>
<polygon points="1137.0,336.0 1144.2,333.8 1144.2,347.0 1137.0,349.4" fill="#cacaca"/>
</g>
<ellipse cx="1112.7" cy="303.5" rx="8" ry="12" fill="none" stroke="#36363a" stroke-width="1.5" opacity="0.7"/>
</g>
<polygon points="984.5,276.4 1119.9,244.1 1152.6,249.5 1025.5,280.6" fill="#1b1b1b"/>
<polygon points="1025.5,280.6 1152.6,249.5 1178.4,250.0 1050.0,284.0" fill="#2c2c2e" opacity="0.55"/>
<polygon points="1154.5,247.6 1178.4,250.0 1152.6,256.9 1152.6,249.5" fill="#707070" opacity="0.7"/>
<g stroke="#161616" stroke-width="0.9" fill="none"><line x1="1025.5" y1="280.6" x2="1152.6" y2="249.5"/><line x1="1025.5" y1="280.6" x2="1023.3" y2="397.7"/><polyline points="982.3,390.9 1023.3,397.7 1151,350.5 1152.6,249.5" stroke="#3a3a3a" stroke-width="0.7"/></g>

<!-- axes seen through case -->
<clipPath id="caseclip"><polygon points="984.5,276.4 1119.9,244.1 1178.4,250 1163,597 1038,685 977,667"/></clipPath>
<line x1="977.5" y1="667.6" x2="1061" y2="615.4" stroke="#a83232" stroke-width="1.05"/>
<line x1="0" y1="333.5" x2="1062" y2="574.2" stroke="#4a9a4a" stroke-width="1.1" stroke-dasharray="1.2 2.9" clip-path="url(#caseclip)"/>
<g stroke="#141414" stroke-width="1" fill="none" stroke-linecap="round">
  <line x1="984.5" y1="276.4" x2="1050" y2="284"/>
  <line x1="1050" y1="284" x2="1178.4" y2="250"/>
  <line x1="1050" y1="284" x2="1038" y2="685"/>
</g>
<polygon points="984.5,276.4 1119.9,244.1 1178.4,250 1163,597 1038,685 977,667" fill="none" stroke="#000" stroke-width="2.3" stroke-linejoin="round"/>
</g><!--endcase-->

<!-- ===== RIGHT GRAY BOX ===== -->
<g id="graybox">
  <polygon points="1205.6,430.6 1330,367.8 1399.6,377.5 1285.1,443.9" fill="#5b5b5b"/>
  <polygon points="1205.6,430.6 1285.1,443.9 1263.9,764.5 1188.8,742" fill="url(#gbl)"/>
  <polygon points="1189.5,735 1264.5,757.5 1263.9,764.5 1188.8,742" fill="url(#gbh)"/>
  <polygon points="1285.1,443.9 1399.6,377.5 1377.7,650.5 1263.9,764.5" fill="url(#gbr)"/>
  <g stroke="#000" stroke-width="1.3" fill="none" stroke-linecap="round">
    <line x1="1205.6" y1="430.6" x2="1285.1" y2="443.9"/>
    <line x1="1285.1" y1="443.9" x2="1399.6" y2="377.5"/>
    <line x1="1285.1" y1="443.9" x2="1263.9" y2="764.5"/>
  </g>
  <polygon points="1205.6,430.6 1330,367.8 1399.6,377.5 1377.7,650.5 1263.9,764.5 1188.8,742" fill="none" stroke="#000" stroke-width="2.3" stroke-linejoin="round"/>
</g>
</svg>
<div id="upgrade"><span>Upgrade Now</span></div>
</div>
</body>
</html>
